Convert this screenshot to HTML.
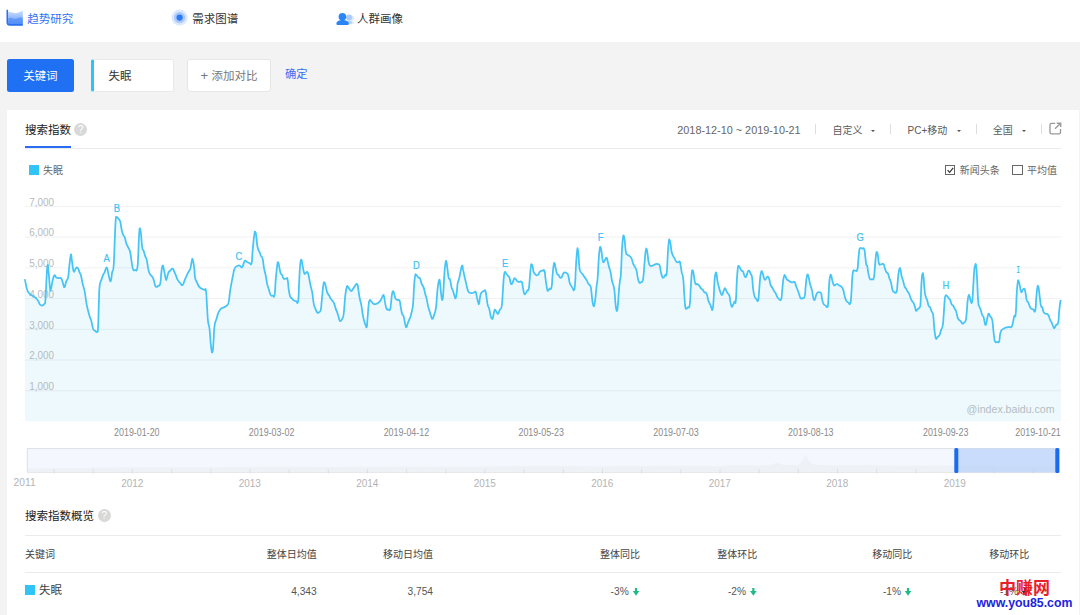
<!DOCTYPE html>
<html lang="zh-CN"><head><meta charset="utf-8"><title>百度指数 - 失眠</title>
<style>
html,body{margin:0;padding:0}
body{width:1080px;height:615px;overflow:hidden;background:#f3f3f3;font-family:"Liberation Sans","Noto Sans CJK SC",sans-serif;color:#333;position:relative}
.abs{position:absolute;white-space:nowrap;line-height:1}
.top{left:0;top:0;width:1080px;height:42px;background:#fff}
.nav{font-size:11.5px;top:13.7px}
.card{left:6.5px;top:109.5px;width:1072.5px;height:520px;background:#fff}
.btn{left:6.7px;top:58.6px;width:67.4px;height:33.1px;background:#2070f3;border-radius:2.5px;color:#fff;font-size:11.5px;text-align:center;line-height:34.5px}
.inp{left:90.7px;top:58.6px;width:82.9px;height:33.1px;background:#fff;border-radius:2.5px;box-sizing:border-box;border:1px solid #e9e9e9;border-left:3.3px solid #2bc4f7;font-size:11.5px;line-height:33.3px;padding-left:14.8px}
.add{left:187.4px;top:58.6px;width:83.4px;height:33.1px;background:#fff;border-radius:3px;box-sizing:border-box;border:1px solid #e6e6e6;font-size:11.5px;line-height:32.5px;color:#777;padding-left:12px}
.ok{left:285px;top:69.3px;font-size:11.3px;color:#3a6df2}
.h{font-size:11.5px;color:#222}
.help{width:13px;height:13px;border-radius:50%;background:#d8d8d8;color:#fff;font-size:10.6px;text-align:center;line-height:13.6px}
.ctl{font-size:10px;color:#5a5a5a;top:126.2px}
.sep{width:1px;height:10px;background:#dedede;top:124.3px}
.tri{width:0;height:0;border-left:2.1px solid transparent;border-right:2.1px solid transparent;border-top:2.4px solid #555;top:129.9px}
.cb{width:8.4px;height:8.4px;border:1px solid #666;background:#fff;top:164.9px}
.t{font-size:10px;color:#444}
.v{font-size:10.2px;color:#555}
.hl{height:1px;background:#ebebeb}
.chart{position:absolute;left:0;top:0}
</style></head><body>
<div class="abs top"></div>
<svg class="abs" style="left:6px;top:9px" width="18" height="18" viewBox="0 0 18 18"><defs><linearGradient id="g1" x1="0" y1="0" x2="0" y2="1"><stop offset="0" stop-color="#d3e3fd"/><stop offset="1" stop-color="#5a93f6"/></linearGradient></defs><path d="M2.2,3.6 C5.5,1.8 8,5.4 11.5,3.8 C13.5,3 15,2.2 16.8,1.2 L16.8,15.5 L2.2,15.5 Z" fill="url(#g1)"/><path d="M2.2,9.5 C5,7.5 7.5,11 10.5,9.6 C12.8,8.6 14.8,8.2 16.8,8.6 L16.8,15.5 L2.2,15.5 Z" fill="#4a8af6" fill-opacity=".6"/><path d="M1.3,0.8 L1.3,13.2 Q1.3,15.9 4,15.9 L16.8,15.9" fill="none" stroke="#2a6ef2" stroke-width="1.6"/></svg>
<div class="abs nav" style="left:27.3px;color:#3571f5">趋势研究</div>
<svg class="abs" style="left:170px;top:8px" width="20" height="20" viewBox="0 0 20 20"><circle cx="9.6" cy="9.6" r="8" fill="#dbe8fd"/><circle cx="9.6" cy="9.6" r="5.6" fill="#a9c8fb"/><circle cx="9.6" cy="9.6" r="3.1" fill="#2b7af5"/></svg>
<div class="abs nav" style="left:192.2px">需求图谱</div>
<svg class="abs" style="left:335px;top:10.6px" width="22" height="16" viewBox="0 0 22 16"><circle cx="16.4" cy="7" r="2.6" fill="#d9e8fe"/><path d="M13,13.6 C13,11 14.6,10.2 16.2,10.2 C17.8,10.2 19.2,11.4 19.2,12.6 Z" fill="#e1edfe"/><circle cx="14" cy="6.4" r="3" fill="#a9cbfb"/><path d="M9.5,14 C9.5,10.5 12,9.6 14,9.6 C16,9.6 17.4,10.6 17.6,12.4 Z" fill="#b9d5fc"/><circle cx="7.4" cy="5.8" r="3.8" fill="#2a85f7"/><path d="M1.4,12.8 C1.4,10 4.2,8.9 7.4,8.9 C10.8,8.9 13.8,10 13.8,12.8 C13.8,13.6 13.2,14.1 12.4,14.1 L2.8,14.1 C2,14.1 1.4,13.6 1.4,12.8 Z" fill="#2a85f7"/></svg>
<div class="abs nav" style="left:357px">人群画像</div>

<div class="abs btn">关键词</div>
<div class="abs inp">失眠</div>
<div class="abs add"><span style="font-size:13px;position:relative;top:.5px">+</span><span style="margin-left:3.6px">添加对比</span></div>
<div class="abs ok">确定</div>

<div class="abs card"></div>
<div class="abs h" style="left:25px;top:125px">搜索指数</div>
<div class="abs help" style="left:74.3px;top:123px">?</div>
<div class="abs hl" style="left:25px;top:147.6px;width:1036px"></div>
<div class="abs" style="left:25px;top:145.5px;width:46px;height:2.5px;background:#2a6cf2"></div>

<div class="abs ctl" style="left:677.3px;font-size:10.85px;top:125.1px;color:#666">2018-12-10 ~ 2019-10-21</div>
<div class="abs sep" style="left:814.7px"></div>
<div class="abs ctl" style="left:832.5px">自定义</div><div class="abs tri" style="left:871.3px"></div>
<div class="abs sep" style="left:890.1px"></div>
<div class="abs ctl" style="left:907.5px">PC+移动</div><div class="abs tri" style="left:956.7px"></div>
<div class="abs sep" style="left:975.6px"></div>
<div class="abs ctl" style="left:992.8px">全国</div><div class="abs tri" style="left:1022.1px"></div>
<div class="abs sep" style="left:1040.8px"></div>
<svg class="abs" style="left:1049px;top:122.4px" width="13" height="13" viewBox="0 0 13 13"><path d="M6.2,1.3 L2.6,1.3 Q1,1.3 1,2.9 L1,10.2 Q1,11.8 2.6,11.8 L9.9,11.8 Q11.5,11.8 11.5,10.2 L11.5,7" fill="none" stroke="#999" stroke-width="1.35"/><path d="M6,6.8 L11.3,1.5 M7.8,1.2 L11.7,1.2 L11.7,5.1" fill="none" stroke="#999" stroke-width="1.35"/></svg>

<div class="abs" style="left:29px;top:165px;width:10px;height:10px;background:#30c4f8"></div>
<div class="abs t" style="left:43px;top:166.2px;color:#666">失眠</div>
<div class="abs cb" style="left:945.1px"></div>
<svg class="abs" style="left:945px;top:165px" width="11" height="11" viewBox="0 0 11 11"><path d="M2.6,5.2 L4.6,7.4 L8.2,2.9" fill="none" stroke="#333" stroke-width="1.2"/></svg>
<div class="abs t" style="left:959.8px;top:166px;color:#666">新闻头条</div>
<div class="abs cb" style="left:1012.3px"></div>
<div class="abs t" style="left:1027px;top:166px;color:#666">平均值</div>

<svg class="chart" width="1080" height="615" viewBox="0 0 1080 615">
<style>
.yl{font:10.9px "Liberation Sans","Noto Sans CJK SC",sans-serif;fill:#b6babd}
.mk{font:10.4px "Liberation Sans",sans-serif;fill:#3cc1f5;stroke:#3cc1f5;stroke-width:.2;text-anchor:middle}
.xl{font:10.3px "Liberation Sans",sans-serif;fill:#8a8a8a}
.yr{font:10.9px "Liberation Sans",sans-serif;fill:#b4b4b4}
.wm{font:10.6px "Liberation Sans",sans-serif;fill:#b3bcc1}
</style>
<line x1="25" x2="1061" y1="390.8" y2="390.8" stroke="#f1f1f1" stroke-width="1"/><line x1="25" x2="1061" y1="360.0" y2="360.0" stroke="#f1f1f1" stroke-width="1"/><line x1="25" x2="1061" y1="329.3" y2="329.3" stroke="#f1f1f1" stroke-width="1"/><line x1="25" x2="1061" y1="298.6" y2="298.6" stroke="#f1f1f1" stroke-width="1"/><line x1="25" x2="1061" y1="267.9" y2="267.9" stroke="#f1f1f1" stroke-width="1"/><line x1="25" x2="1061" y1="237.1" y2="237.1" stroke="#f1f1f1" stroke-width="1"/><line x1="25" x2="1061" y1="206.4" y2="206.4" stroke="#f1f1f1" stroke-width="1"/>
<path d="M25.0,279.9 C25.7,282.7 25.8,286.6 27.5,290.6 C29.2,294.6 29.3,293.1 31.3,294.9 C33.3,296.7 33.2,295.9 35.0,297.4 C36.8,298.9 36.6,298.6 38.0,300.6 C39.5,302.7 38.9,304.2 40.5,305.1 C42.2,306.1 43.0,305.9 44.3,304.1 C45.6,302.4 44.9,305.5 45.5,298.6 C46.1,291.8 46.0,287.4 46.5,278.6 C47.1,269.8 47.0,267.6 47.5,265.6 C48.1,263.6 47.9,265.1 48.5,271.1 C49.2,277.1 49.4,283.4 50.0,288.1 C50.7,292.8 50.4,290.5 51.0,288.6 C51.7,286.8 51.7,284.6 52.5,281.1 C53.4,277.6 53.3,276.4 54.3,275.4 C55.3,274.4 55.1,276.6 56.3,277.4 C57.5,278.1 57.5,277.8 58.8,278.1 C60.1,278.4 60.2,277.1 61.3,278.6 C62.4,280.1 62.2,281.4 63.1,283.6 C63.9,285.9 63.7,287.8 64.6,287.1 C65.4,286.5 65.4,283.7 66.3,281.1 C67.3,278.5 67.3,281.4 68.1,277.4 C68.9,273.4 68.6,272.1 69.3,266.1 C70.1,260.1 70.2,256.5 70.8,254.8 C71.5,253.2 71.1,255.5 71.8,259.8 C72.6,264.2 72.6,268.8 73.6,271.1 C74.6,273.4 74.5,269.5 75.6,268.6 C76.6,267.7 76.5,266.8 77.6,267.8 C78.7,268.8 78.7,270.1 79.6,272.4 C80.5,274.6 80.3,273.1 81.1,276.1 C81.9,279.1 81.7,279.6 82.6,283.6 C83.5,287.6 83.6,286.1 84.6,291.1 C85.6,296.1 85.5,297.7 86.3,302.4 C87.1,307.1 86.7,305.0 87.6,308.6 C88.5,312.3 88.6,312.8 89.6,316.2 C90.6,319.5 90.4,317.8 91.4,321.2 C92.3,324.5 92.1,326.1 93.1,328.7 C94.1,331.2 94.0,329.9 95.1,330.7 C96.2,331.5 96.3,332.9 97.1,331.7 C97.9,330.5 97.7,334.3 98.1,326.2 C98.6,318.0 98.5,311.8 98.9,301.1 C99.3,290.5 99.0,291.8 99.6,286.1 C100.3,280.4 100.4,282.9 101.4,279.9 C102.3,276.9 102.3,276.9 103.1,274.9 C104.0,272.8 103.7,274.4 104.6,272.4 C105.6,270.3 105.7,267.3 106.6,267.3 C107.6,267.3 107.3,269.2 108.1,272.4 C108.9,275.5 108.9,276.9 109.6,279.1 C110.4,281.3 110.2,282.4 110.9,280.6 C111.6,278.8 111.4,276.2 112.1,272.4 C112.9,268.5 113.0,273.8 113.6,266.1 C114.3,258.4 114.1,255.6 114.6,243.6 C115.2,231.5 115.1,228.0 115.6,221.0 C116.2,214.0 116.0,217.9 116.6,217.3 C117.3,216.6 117.2,217.4 118.2,218.5 C119.1,219.7 119.2,218.5 120.2,221.5 C121.1,224.5 120.9,226.3 121.7,229.8 C122.5,233.3 122.3,232.8 123.2,234.8 C124.0,236.8 123.8,235.0 124.7,237.3 C125.5,239.6 125.5,240.9 126.4,243.6 C127.3,246.2 127.2,245.0 128.2,247.3 C129.2,249.6 129.2,248.3 130.2,252.3 C131.1,256.3 130.9,257.8 131.7,262.3 C132.5,266.9 132.2,267.3 133.2,269.4 C134.1,271.4 134.1,270.1 135.2,269.9 C136.2,269.6 136.4,272.3 137.2,268.6 C138.0,264.9 137.6,265.4 138.2,256.1 C138.7,246.7 138.6,240.8 139.2,233.5 C139.7,226.3 139.6,228.4 140.2,229.0 C140.7,229.7 140.6,231.2 141.2,236.1 C141.7,240.9 141.5,243.3 142.2,247.3 C142.8,251.3 142.9,248.7 143.7,251.1 C144.5,253.4 144.4,253.7 145.2,256.1 C146.0,258.4 145.9,256.5 146.7,259.8 C147.5,263.2 147.4,264.9 148.2,268.6 C149.0,272.3 148.8,271.6 149.7,273.6 C150.6,275.6 150.6,274.4 151.7,276.1 C152.8,277.8 152.8,277.3 153.7,279.9 C154.6,282.4 154.4,283.8 155.2,285.6 C156.0,287.5 155.9,286.9 156.7,286.9 C157.5,286.9 157.3,286.5 158.2,285.6 C159.1,284.8 159.3,287.5 160.2,283.6 C161.1,279.7 160.8,275.9 161.5,271.1 C162.1,266.3 162.0,265.9 162.7,265.6 C163.4,265.3 163.2,266.4 164.0,269.9 C164.8,273.3 165.0,276.3 165.7,278.6 C166.5,280.9 166.1,280.1 166.7,278.6 C167.4,277.1 167.3,275.2 168.2,273.1 C169.2,271.0 169.0,271.8 170.2,270.6 C171.4,269.4 171.7,268.3 172.7,268.6 C173.8,268.9 173.4,269.9 174.2,271.6 C175.0,273.3 174.8,272.6 175.7,274.9 C176.7,277.1 176.5,277.7 177.7,279.9 C178.9,282.1 178.9,281.8 180.2,283.1 C181.6,284.5 181.5,285.7 182.7,284.9 C183.9,284.0 183.8,282.1 184.8,279.9 C185.7,277.7 185.3,278.6 186.2,276.6 C187.2,274.6 187.2,274.5 188.2,272.4 C189.3,270.2 189.3,271.6 190.3,268.6 C191.2,265.6 191.1,263.4 191.8,261.1 C192.4,258.7 192.1,257.8 192.8,259.8 C193.4,261.8 193.7,263.9 194.3,268.6 C194.9,273.3 194.3,273.7 195.0,277.4 C195.7,281.0 195.9,279.9 197.0,282.4 C198.1,284.8 197.8,285.0 199.0,286.6 C200.2,288.3 200.1,287.8 201.5,288.6 C203.0,289.5 203.3,289.2 204.5,289.9 C205.7,290.5 205.4,286.8 206.0,291.1 C206.7,295.5 206.5,298.1 207.0,306.1 C207.6,314.2 207.4,315.2 208.0,321.2 C208.7,327.2 208.7,322.0 209.5,328.7 C210.3,335.4 210.2,340.0 211.0,346.2 C211.8,352.4 211.9,353.3 212.5,352.0 C213.2,350.6 213.0,348.1 213.5,341.2 C214.1,334.3 213.7,332.2 214.5,326.2 C215.3,320.2 215.5,322.3 216.5,318.7 C217.6,315.0 217.3,315.1 218.5,312.4 C219.7,309.7 219.7,310.0 221.1,308.6 C222.4,307.3 222.1,308.2 223.6,307.4 C225.0,306.6 225.2,307.0 226.6,305.6 C227.9,304.3 227.6,306.3 228.6,302.4 C229.5,298.5 229.3,296.5 230.1,291.1 C230.9,285.8 230.8,286.7 231.6,282.4 C232.4,278.0 232.3,278.5 233.1,274.9 C233.9,271.2 233.5,270.9 234.6,268.6 C235.6,266.3 235.7,266.9 237.1,266.1 C238.4,265.3 238.2,265.3 239.6,265.6 C240.9,265.9 241.0,267.9 242.1,267.3 C243.1,266.8 242.8,265.4 243.6,263.6 C244.4,261.8 244.1,261.0 245.1,260.6 C246.0,260.2 245.9,261.4 247.1,262.1 C248.3,262.7 248.4,262.8 249.6,263.1 C250.8,263.4 250.8,266.3 251.6,263.1 C252.4,259.9 251.9,258.3 252.6,251.1 C253.3,243.9 253.4,241.2 254.1,236.1 C254.8,230.9 254.8,231.5 255.3,231.8 C255.9,232.1 255.8,233.2 256.4,237.3 C257.0,241.4 256.7,243.3 257.6,247.3 C258.5,251.3 258.7,250.0 259.6,252.3 C260.5,254.7 260.3,254.4 261.1,256.1 C261.9,257.7 261.8,255.2 262.6,258.6 C263.4,261.9 263.3,264.3 264.1,268.6 C264.9,272.9 264.8,270.8 265.6,274.9 C266.4,278.9 266.3,279.9 267.1,283.6 C267.9,287.3 267.7,285.6 268.6,288.6 C269.6,291.6 269.6,293.0 270.6,294.9 C271.7,296.7 271.6,295.6 272.6,295.6 C273.7,295.6 273.8,298.8 274.6,294.9 C275.4,291.0 275.0,288.8 275.6,281.1 C276.3,273.4 276.5,271.1 277.1,266.1 C277.8,261.1 277.6,262.3 278.1,262.3 C278.7,262.3 278.5,263.2 279.1,266.1 C279.8,269.0 279.8,270.8 280.6,273.1 C281.4,275.4 281.3,273.4 282.1,274.9 C282.9,276.3 282.6,277.6 283.6,278.6 C284.7,279.6 285.1,278.4 286.1,278.6 C287.2,278.8 287.0,276.7 287.6,279.4 C288.3,282.0 288.0,284.1 288.6,288.6 C289.3,293.1 289.2,293.5 290.1,296.1 C291.1,298.8 291.1,297.4 292.1,298.6 C293.2,299.8 293.1,300.0 294.2,300.6 C295.2,301.3 295.1,301.1 296.2,301.1 C297.2,301.1 297.4,306.0 298.2,300.6 C299.0,295.3 298.6,290.7 299.2,281.1 C299.7,271.6 299.6,270.5 300.2,264.8 C300.8,259.2 300.8,259.5 301.4,259.8 C302.1,260.2 301.9,262.6 302.7,266.1 C303.4,269.6 303.4,271.2 304.2,273.1 C305.0,275.0 304.7,273.3 305.7,273.1 C306.6,272.9 306.7,270.9 307.7,272.4 C308.6,273.8 308.4,274.9 309.2,278.6 C310.0,282.3 309.9,282.4 310.7,286.1 C311.5,289.8 311.4,287.7 312.2,292.4 C313.0,297.1 312.9,299.4 313.7,303.6 C314.5,307.9 314.3,305.8 315.2,308.1 C316.1,310.5 316.3,311.3 317.2,312.4 C318.1,313.5 317.8,313.1 318.7,312.4 C319.6,311.7 319.9,312.9 320.7,309.9 C321.5,306.9 321.0,307.5 321.7,301.1 C322.4,294.8 322.5,291.1 323.2,286.1 C323.9,281.1 323.8,282.4 324.4,282.4 C325.1,282.4 325.0,283.4 325.7,286.1 C326.4,288.8 326.3,289.8 327.2,292.4 C328.1,294.9 328.3,294.0 329.2,295.6 C330.1,297.3 329.8,297.2 330.7,298.6 C331.6,300.1 331.8,299.8 332.7,301.1 C333.6,302.5 333.4,301.6 334.2,303.6 C335.0,305.7 334.9,306.3 335.7,308.6 C336.5,311.0 336.4,310.1 337.2,312.4 C338.0,314.7 337.9,315.1 338.7,317.4 C339.5,319.8 339.3,320.8 340.2,321.2 C341.2,321.5 341.3,320.7 342.2,318.7 C343.2,316.7 342.9,319.7 343.7,313.7 C344.5,307.7 344.4,303.2 345.2,296.1 C346.0,289.1 346.1,289.9 346.7,287.4 C347.4,284.8 347.1,286.3 347.7,286.6 C348.4,287.0 348.3,287.4 349.2,288.6 C350.2,289.8 350.2,291.1 351.2,291.1 C352.3,291.1 352.2,290.1 353.2,288.6 C354.3,287.2 354.2,286.8 355.2,285.6 C356.3,284.4 356.4,283.3 357.2,284.1 C358.1,284.9 357.6,284.7 358.2,288.6 C358.9,292.5 358.9,294.3 359.8,298.6 C360.6,303.0 360.5,300.6 361.3,304.9 C362.1,309.2 362.0,310.6 362.8,314.9 C363.6,319.2 363.5,318.5 364.3,321.2 C365.0,323.8 364.8,323.5 365.5,324.9 C366.2,326.4 366.2,328.3 366.8,326.7 C367.3,325.0 367.0,324.1 367.5,318.7 C368.0,313.2 368.0,311.0 368.5,306.1 C369.0,301.3 368.8,302.0 369.5,300.6 C370.2,299.3 370.1,300.3 371.0,301.1 C372.0,301.9 372.0,302.8 373.0,303.6 C374.1,304.5 374.0,304.1 375.0,304.1 C376.1,304.1 375.8,304.3 377.0,303.6 C378.2,303.0 378.3,303.0 379.5,301.6 C380.7,300.3 380.6,300.3 381.5,298.6 C382.5,297.0 382.4,296.0 383.0,295.4 C383.7,294.7 383.5,294.3 384.0,296.1 C384.6,298.0 384.4,299.1 385.0,302.4 C385.7,305.7 385.7,306.8 386.5,308.6 C387.3,310.5 387.1,309.2 388.0,309.4 C389.0,309.6 389.2,311.3 390.1,309.4 C390.9,307.5 390.5,306.6 391.1,302.4 C391.6,298.2 391.5,296.6 392.1,293.6 C392.6,290.6 392.5,291.1 393.1,291.1 C393.6,291.1 393.4,291.6 394.1,293.6 C394.7,295.6 394.6,297.0 395.6,298.6 C396.5,300.3 396.5,299.4 397.6,299.9 C398.6,300.4 398.8,299.0 399.6,300.6 C400.4,302.3 399.9,302.7 400.6,306.1 C401.2,309.6 401.3,311.0 402.1,313.7 C402.9,316.3 402.8,313.5 403.6,316.2 C404.4,318.8 404.3,320.7 405.1,323.7 C405.8,326.7 405.7,327.4 406.3,327.4 C407.0,327.4 406.8,325.7 407.6,323.7 C408.3,321.7 408.3,321.9 409.1,319.9 C409.9,317.9 409.8,318.8 410.6,316.2 C411.4,313.5 411.4,313.2 412.1,309.9 C412.7,306.6 412.5,310.0 413.1,303.6 C413.6,297.3 413.5,293.5 414.1,286.1 C414.6,278.8 414.5,279.1 415.1,276.1 C415.7,273.1 415.5,274.5 416.3,274.9 C417.1,275.2 417.1,276.4 418.1,277.4 C419.1,278.4 419.2,276.9 420.1,278.6 C421.0,280.3 420.7,281.3 421.6,283.6 C422.5,286.0 422.7,284.7 423.6,287.4 C424.5,290.0 424.3,290.6 425.1,293.6 C425.9,296.6 425.8,295.3 426.6,298.6 C427.4,302.0 427.3,302.8 428.1,306.1 C428.9,309.5 428.8,308.5 429.6,311.2 C430.4,313.8 430.3,314.2 431.1,316.2 C431.9,318.2 431.8,319.0 432.6,318.7 C433.4,318.3 433.3,317.2 434.1,314.9 C434.9,312.6 434.9,313.6 435.6,309.9 C436.3,306.2 436.1,306.8 436.6,301.1 C437.1,295.5 437.0,294.2 437.6,288.6 C438.3,283.0 438.5,281.4 439.1,280.1 C439.8,278.8 439.6,280.0 440.1,283.6 C440.7,287.2 440.5,289.3 441.1,293.6 C441.7,298.0 441.8,300.6 442.4,299.9 C443.0,299.2 442.8,298.1 443.4,291.1 C443.9,284.1 443.8,280.9 444.4,273.6 C444.9,266.3 444.8,266.8 445.4,263.6 C445.9,260.4 445.8,260.2 446.4,261.6 C446.9,262.9 446.8,264.4 447.4,268.6 C448.0,272.8 447.9,274.4 448.6,277.4 C449.4,280.4 449.3,277.2 450.1,279.9 C450.9,282.5 450.8,284.4 451.6,287.4 C452.4,290.4 452.3,288.8 453.1,291.1 C453.9,293.5 454.0,294.3 454.6,296.1 C455.3,298.0 455.1,298.8 455.6,298.1 C456.2,297.5 456.1,297.5 456.6,293.6 C457.2,289.8 457.0,287.6 457.6,283.6 C458.3,279.6 458.3,281.9 459.1,278.6 C459.9,275.3 459.8,274.6 460.6,271.1 C461.4,267.6 461.5,265.9 462.1,265.6 C462.8,265.3 462.5,266.7 463.1,269.9 C463.8,273.0 463.9,273.7 464.7,277.4 C465.5,281.0 465.4,280.3 466.2,283.6 C467.0,287.0 466.9,287.5 467.7,289.9 C468.5,292.2 468.1,291.5 469.2,292.4 C470.2,293.2 470.3,293.1 471.7,293.1 C473.0,293.1 473.1,292.7 474.2,292.4 C475.2,292.0 475.0,290.9 475.7,291.9 C476.3,292.9 476.0,293.3 476.7,296.1 C477.3,298.9 477.5,300.5 478.2,302.4 C478.8,304.3 478.6,304.8 479.2,303.1 C479.7,301.5 479.5,299.0 480.2,296.1 C480.8,293.3 480.7,293.7 481.7,292.4 C482.6,291.0 482.8,291.6 483.7,291.1 C484.6,290.7 484.5,289.6 485.2,290.6 C485.9,291.6 485.5,291.1 486.2,294.9 C486.9,298.7 486.9,301.2 487.7,304.9 C488.5,308.6 488.4,305.6 489.2,308.6 C490.0,311.7 489.9,313.4 490.7,316.2 C491.5,319.0 491.5,319.2 492.2,319.2 C492.9,319.2 492.7,318.3 493.2,316.2 C493.7,314.0 493.7,312.8 494.2,311.2 C494.7,309.5 494.5,309.6 495.2,309.9 C495.9,310.2 495.9,311.4 496.7,312.4 C497.5,313.4 497.4,314.3 498.2,313.7 C499.0,313.0 498.8,311.9 499.7,309.9 C500.6,307.9 500.9,310.5 501.7,306.1 C502.5,301.8 502.2,301.0 502.7,293.6 C503.2,286.3 503.2,284.3 503.7,278.6 C504.3,272.9 504.1,273.7 504.7,272.4 C505.4,271.0 505.4,272.7 506.2,273.6 C507.0,274.5 506.9,274.7 507.7,275.6 C508.5,276.5 508.6,275.4 509.2,276.9 C509.9,278.3 509.7,279.2 510.2,281.1 C510.8,283.0 510.6,283.8 511.2,284.1 C511.9,284.5 511.9,283.8 512.7,282.4 C513.5,280.9 513.4,279.5 514.2,278.6 C515.0,277.7 514.9,278.4 515.7,279.1 C516.5,279.8 516.3,280.4 517.2,281.1 C518.2,281.8 518.0,281.7 519.2,281.9 C520.4,282.1 520.8,280.7 521.7,281.9 C522.7,283.0 522.1,283.0 522.7,286.1 C523.4,289.3 523.4,291.8 524.2,293.6 C525.1,295.5 525.0,293.9 525.8,293.1 C526.5,292.3 526.5,291.8 527.2,290.6 C528.0,289.4 528.1,291.8 528.8,288.6 C529.4,285.4 529.2,284.3 529.8,278.6 C530.3,272.9 530.2,271.1 530.8,267.3 C531.3,263.5 531.2,264.3 531.8,264.3 C532.3,264.3 532.2,265.2 532.8,267.3 C533.3,269.5 532.9,270.3 533.8,272.4 C534.6,274.4 534.9,274.2 536.0,274.9 C537.1,275.5 536.9,275.7 538.0,274.9 C539.1,274.0 538.8,272.7 540.0,271.6 C541.2,270.5 541.3,270.7 542.5,270.6 C543.7,270.5 543.7,269.0 544.5,271.1 C545.3,273.2 544.9,273.9 545.5,278.6 C546.2,283.3 546.4,285.4 547.0,288.6 C547.7,291.8 547.4,290.6 548.0,290.6 C548.7,290.6 548.6,289.5 549.5,288.6 C550.5,287.8 550.7,290.7 551.5,287.4 C552.3,284.0 552.0,281.8 552.5,276.1 C553.1,270.4 553.0,269.6 553.5,266.1 C554.1,262.6 554.0,262.8 554.5,263.1 C555.1,263.4 554.9,264.5 555.5,267.3 C556.2,270.1 556.2,271.6 557.0,273.6 C557.8,275.6 557.7,273.8 558.5,274.9 C559.3,275.9 559.2,276.7 560.0,277.4 C560.9,278.0 560.8,278.2 561.5,277.4 C562.3,276.5 562.2,275.4 563.0,274.1 C563.8,272.8 563.6,272.6 564.5,272.4 C565.5,272.1 565.6,272.4 566.5,273.1 C567.5,273.8 567.3,272.4 568.1,274.9 C568.9,277.3 568.8,279.5 569.6,282.4 C570.4,285.2 570.3,284.1 571.1,285.6 C571.9,287.2 571.8,287.0 572.6,288.1 C573.4,289.3 573.4,291.1 574.1,289.9 C574.7,288.7 574.5,290.6 575.1,283.6 C575.6,276.6 575.5,272.3 576.1,263.6 C576.6,254.9 576.6,254.9 577.1,251.1 C577.5,247.3 577.4,248.0 577.8,249.3 C578.2,250.6 578.1,250.9 578.6,256.1 C579.0,261.2 578.9,264.3 579.6,268.6 C580.2,272.9 580.3,270.9 581.1,272.4 C581.9,273.8 581.8,273.0 582.6,274.1 C583.4,275.2 583.3,275.4 584.1,276.6 C584.9,277.8 584.8,277.4 585.6,278.6 C586.4,279.8 586.3,279.6 587.1,281.1 C587.9,282.6 587.7,282.7 588.6,284.1 C589.5,285.6 589.8,284.1 590.6,286.6 C591.4,289.2 591.1,289.4 591.6,293.6 C592.1,297.8 592.1,299.1 592.6,302.4 C593.1,305.7 593.1,305.8 593.6,306.1 C594.1,306.5 594.1,306.3 594.6,303.6 C595.1,301.0 595.1,300.8 595.6,296.1 C596.1,291.5 596.1,290.8 596.6,286.1 C597.1,281.4 597.1,285.3 597.6,278.6 C598.1,271.9 598.1,268.8 598.6,261.1 C599.1,253.4 599.1,253.5 599.6,249.8 C600.1,246.1 600.1,246.6 600.6,247.3 C601.1,248.0 601.1,249.0 601.6,252.3 C602.1,255.7 602.1,257.2 602.6,259.8 C603.1,262.5 602.9,262.3 603.6,262.3 C604.3,262.3 604.3,261.0 605.1,259.8 C605.9,258.6 605.9,257.5 606.6,257.8 C607.3,258.2 607.0,258.5 607.6,261.1 C608.3,263.6 608.3,264.3 609.1,267.3 C609.9,270.3 609.8,268.7 610.6,272.4 C611.4,276.0 611.3,277.4 612.1,281.1 C612.9,284.8 613.0,283.1 613.6,286.1 C614.3,289.1 614.1,287.4 614.6,292.4 C615.2,297.4 615.0,299.9 615.6,304.9 C616.2,309.9 616.3,311.2 616.9,311.2 C617.5,311.2 617.3,310.2 617.9,304.9 C618.4,299.6 618.3,297.5 618.9,291.1 C619.4,284.8 619.3,285.8 619.9,281.1 C620.4,276.4 620.4,281.6 620.9,273.6 C621.4,265.6 621.4,260.4 621.9,251.1 C622.4,241.7 622.4,242.6 622.9,238.6 C623.4,234.5 623.4,235.1 623.9,236.1 C624.4,237.1 624.4,238.0 624.9,242.3 C625.4,246.6 625.2,249.0 625.9,252.3 C626.6,255.7 626.6,253.8 627.6,254.8 C628.7,255.8 628.6,255.1 629.6,256.1 C630.7,257.1 630.7,256.6 631.6,258.6 C632.6,260.6 632.2,261.3 633.1,263.6 C634.1,265.9 634.2,265.3 635.2,267.3 C636.1,269.3 636.0,268.4 636.7,271.1 C637.3,273.8 637.0,274.4 637.7,277.4 C638.3,280.4 638.4,281.0 639.2,282.4 C640.0,283.7 639.7,282.8 640.7,282.4 C641.6,281.9 641.9,282.9 642.7,280.6 C643.5,278.3 643.1,278.8 643.7,273.6 C644.2,268.4 644.1,267.1 644.7,261.1 C645.2,255.1 645.1,254.3 645.7,251.1 C646.2,247.9 646.1,248.1 646.7,249.1 C647.2,250.1 647.1,251.3 647.7,254.8 C648.2,258.4 648.0,259.5 648.7,262.3 C649.3,265.2 649.1,264.7 650.2,265.6 C651.2,266.5 651.3,265.9 652.7,265.6 C654.0,265.3 653.9,264.7 655.2,264.3 C656.5,263.9 656.5,263.8 657.7,264.1 C658.9,264.4 658.9,263.7 659.7,265.6 C660.5,267.5 660.0,268.2 660.7,271.1 C661.4,274.0 661.4,274.9 662.2,276.6 C663.0,278.3 662.9,277.8 663.7,277.4 C664.5,276.9 664.4,276.0 665.2,274.9 C666.0,273.7 666.0,278.1 666.7,273.1 C667.4,268.1 667.2,264.3 667.7,256.1 C668.2,247.9 668.2,246.5 668.7,242.3 C669.2,238.1 669.2,239.6 669.7,240.3 C670.2,241.0 670.2,241.6 670.7,244.8 C671.2,248.0 671.0,249.3 671.7,252.3 C672.4,255.3 672.4,254.4 673.2,256.1 C674.0,257.7 673.9,257.1 674.7,258.6 C675.5,260.0 675.3,260.6 676.2,261.6 C677.2,262.6 677.3,262.3 678.2,262.3 C679.2,262.3 679.1,260.6 679.7,261.6 C680.4,262.6 680.2,263.2 680.7,266.1 C681.3,269.0 681.1,269.0 681.7,272.4 C682.4,275.7 682.6,272.9 683.2,278.6 C683.9,284.3 683.7,286.3 684.2,293.6 C684.8,301.0 684.7,302.1 685.2,306.1 C685.8,310.2 685.6,308.3 686.2,308.6 C686.9,309.0 686.8,308.4 687.7,307.4 C688.7,306.4 688.9,309.9 689.7,304.9 C690.5,299.9 690.2,297.0 690.7,288.6 C691.3,280.3 691.2,278.4 691.7,273.6 C692.3,268.8 692.2,270.3 692.7,270.6 C693.3,270.9 693.1,271.5 693.8,274.9 C694.4,278.2 694.3,280.6 695.2,283.1 C696.2,285.6 696.2,283.5 697.2,284.1 C698.3,284.8 698.3,284.6 699.2,285.6 C700.2,286.7 699.8,287.0 700.8,288.1 C701.7,289.3 701.8,288.7 702.8,289.9 C703.7,291.0 703.5,291.7 704.3,292.4 C705.0,293.0 704.8,291.7 705.5,292.4 C706.2,293.0 706.2,292.5 707.0,294.9 C707.8,297.2 707.7,298.7 708.5,301.1 C709.3,303.6 709.2,302.3 710.0,304.1 C710.8,306.0 710.9,306.7 711.5,308.1 C712.2,309.6 712.0,311.3 712.5,309.4 C713.1,307.5 713.0,308.7 713.5,301.1 C714.1,293.6 714.0,288.5 714.5,281.1 C715.1,273.8 715.0,275.5 715.5,273.6 C716.1,271.7 716.0,272.1 716.5,274.1 C717.1,276.1 716.9,277.6 717.5,281.1 C718.2,284.6 718.2,284.4 719.0,287.4 C719.8,290.4 719.7,290.4 720.5,292.4 C721.3,294.4 721.2,295.2 722.0,294.9 C722.8,294.5 722.7,292.9 723.5,291.1 C724.3,289.3 724.2,288.1 725.0,288.1 C725.8,288.1 725.7,289.7 726.5,291.1 C727.3,292.6 727.2,292.3 728.0,293.6 C728.8,295.0 728.9,293.8 729.5,296.1 C730.2,298.5 729.9,299.6 730.5,302.4 C731.2,305.2 731.1,306.0 731.8,306.6 C732.5,307.3 732.3,306.2 733.0,304.9 C733.8,303.6 733.8,302.8 734.5,301.6 C735.3,300.5 735.2,306.1 735.8,300.6 C736.4,295.2 736.3,289.7 736.8,281.1 C737.3,272.6 737.3,272.6 737.8,268.6 C738.3,264.6 738.2,266.2 738.8,266.1 C739.4,266.0 739.3,266.9 740.1,268.1 C740.8,269.3 740.8,269.7 741.6,270.6 C742.4,271.5 742.3,270.1 743.1,271.6 C743.9,273.1 743.8,274.8 744.6,276.1 C745.4,277.4 745.3,277.6 746.1,276.6 C746.9,275.6 746.8,274.0 747.6,272.4 C748.4,270.7 748.3,270.3 749.1,270.6 C749.9,270.9 749.8,271.8 750.6,273.6 C751.4,275.4 751.4,273.4 752.1,277.4 C752.7,281.4 752.4,283.5 753.1,288.6 C753.7,293.8 753.8,294.0 754.6,296.6 C755.4,299.3 755.1,297.6 756.1,298.6 C757.0,299.6 757.3,302.4 758.1,300.4 C758.9,298.4 758.6,296.9 759.1,291.1 C759.6,285.3 759.6,283.6 760.1,278.6 C760.6,273.6 760.6,274.2 761.1,272.4 C761.6,270.5 761.6,270.9 762.1,271.6 C762.6,272.3 762.4,272.8 763.1,274.9 C763.8,276.9 763.8,278.4 764.6,279.4 C765.4,280.4 765.3,279.3 766.1,278.6 C766.9,277.9 766.8,276.6 767.6,276.6 C768.4,276.6 768.3,276.4 769.1,278.6 C769.9,280.8 769.7,282.3 770.6,284.9 C771.5,287.4 771.7,286.5 772.6,288.1 C773.5,289.8 773.3,289.8 774.1,291.1 C774.9,292.5 774.8,291.7 775.6,293.1 C776.4,294.6 776.3,295.2 777.1,296.6 C777.9,298.1 777.6,297.9 778.6,298.6 C779.7,299.4 780.2,301.4 781.1,299.4 C782.1,297.4 781.6,296.0 782.1,291.1 C782.7,286.3 782.6,285.1 783.1,281.1 C783.7,277.1 783.6,277.6 784.1,276.1 C784.7,274.6 784.5,274.8 785.1,275.6 C785.8,276.4 785.7,277.8 786.6,279.1 C787.6,280.4 787.6,279.9 788.6,280.6 C789.7,281.3 789.6,281.4 790.6,281.9 C791.7,282.3 791.6,282.4 792.6,282.4 C793.7,282.4 793.7,280.9 794.6,281.9 C795.6,282.9 795.3,284.0 796.1,286.1 C796.9,288.3 796.8,287.7 797.6,289.9 C798.5,292.0 798.4,291.9 799.1,294.1 C799.9,296.3 799.7,297.1 800.6,298.1 C801.6,299.2 801.6,298.7 802.6,298.1 C803.7,297.6 803.9,299.3 804.7,296.1 C805.5,292.9 805.1,291.1 805.7,286.1 C806.2,281.1 806.1,280.5 806.7,277.4 C807.2,274.2 807.1,274.4 807.7,274.4 C808.2,274.4 808.1,275.2 808.7,277.4 C809.2,279.5 809.1,280.0 809.7,282.4 C810.2,284.7 810.0,283.8 810.7,286.1 C811.3,288.5 811.5,288.1 812.2,291.1 C812.8,294.1 812.5,295.1 813.2,297.4 C813.8,299.7 813.9,300.6 814.7,299.9 C815.5,299.2 815.4,296.9 816.2,294.9 C817.0,292.9 816.7,293.0 817.7,292.4 C818.6,291.7 818.7,292.0 819.7,292.4 C820.6,292.7 820.5,291.6 821.2,293.6 C821.8,295.6 821.5,297.1 822.2,299.9 C822.8,302.7 822.8,302.6 823.7,304.1 C824.6,305.7 824.8,304.9 825.7,305.6 C826.6,306.4 826.5,307.8 827.2,306.9 C827.9,306.0 827.7,308.6 828.2,302.4 C828.7,296.2 828.7,290.6 829.2,283.6 C829.7,276.6 829.7,278.2 830.2,276.1 C830.7,274.0 830.7,274.6 831.2,275.6 C831.7,276.6 831.5,277.4 832.2,279.9 C832.9,282.3 832.9,283.5 833.7,284.9 C834.5,286.2 834.3,285.1 835.2,284.9 C836.1,284.7 836.1,283.9 837.2,284.1 C838.3,284.3 838.1,285.0 839.2,285.6 C840.3,286.3 840.1,285.5 841.2,286.6 C842.3,287.8 842.3,287.3 843.2,289.9 C844.1,292.4 843.9,293.3 844.7,296.1 C845.5,299.0 845.3,299.0 846.2,300.6 C847.2,302.3 847.2,301.6 848.2,302.4 C849.3,303.2 849.4,305.3 850.2,303.6 C851.0,302.0 850.7,302.8 851.2,296.1 C851.8,289.5 851.7,285.3 852.2,278.6 C852.8,271.9 852.6,273.2 853.2,271.1 C853.9,269.0 853.7,270.9 854.7,270.6 C855.8,270.3 856.3,272.4 857.2,269.9 C858.2,267.3 857.7,266.1 858.2,261.1 C858.8,256.1 858.7,254.5 859.2,251.1 C859.8,247.6 859.4,248.7 860.2,248.1 C861.0,247.4 861.2,248.3 862.2,248.6 C863.3,248.8 863.4,247.1 864.2,249.1 C865.1,251.1 864.7,252.1 865.2,256.1 C865.8,260.1 865.7,261.4 866.2,264.1 C866.8,266.8 866.7,263.9 867.2,266.1 C867.8,268.3 867.6,269.0 868.2,272.4 C868.9,275.7 868.8,276.8 869.8,278.6 C870.7,280.4 870.7,279.2 871.8,279.1 C872.8,279.0 873.0,280.9 873.8,278.1 C874.6,275.3 874.4,271.8 874.8,268.6 C875.1,265.4 874.7,269.8 875.0,266.1 C875.3,262.4 875.5,258.5 876.0,254.8 C876.5,251.1 876.5,252.0 877.0,252.3 C877.5,252.7 877.5,253.1 878.0,256.1 C878.5,259.1 878.2,261.4 879.0,263.6 C879.8,265.8 879.8,264.2 881.0,264.3 C882.2,264.5 882.5,263.0 883.5,264.1 C884.6,265.2 884.2,266.4 885.0,268.6 C885.8,270.8 885.7,271.0 886.5,272.4 C887.3,273.7 887.2,271.9 888.0,273.6 C888.8,275.3 888.7,276.3 889.5,278.6 C890.3,280.9 890.2,279.4 891.0,282.4 C891.8,285.4 891.7,287.3 892.5,289.9 C893.3,292.4 893.0,291.3 894.0,291.9 C895.1,292.4 895.6,294.1 896.5,291.9 C897.5,289.7 897.0,288.5 897.5,283.6 C898.1,278.7 898.0,277.6 898.5,273.6 C899.1,269.6 899.0,269.6 899.5,268.6 C900.1,267.6 900.0,268.0 900.5,269.9 C901.1,271.7 900.9,272.7 901.5,275.6 C902.2,278.5 902.2,277.8 903.0,280.6 C903.8,283.4 903.8,284.0 904.5,286.1 C905.3,288.3 905.2,287.2 906.0,288.6 C906.9,290.1 906.8,290.3 907.6,291.6 C908.4,293.0 908.3,291.9 909.1,293.6 C909.9,295.4 909.8,296.1 910.6,298.1 C911.4,300.1 911.3,299.8 912.1,301.1 C912.9,302.5 912.8,301.5 913.6,303.1 C914.4,304.8 914.4,305.4 915.1,307.4 C915.7,309.4 915.4,310.2 916.1,310.7 C916.7,311.1 916.6,310.0 917.6,309.1 C918.5,308.3 918.8,309.2 919.6,307.4 C920.4,305.6 920.0,309.4 920.6,302.4 C921.1,295.4 921.0,288.8 921.6,281.1 C922.1,273.4 922.0,274.6 922.6,273.6 C923.1,272.6 923.0,273.0 923.6,277.4 C924.1,281.7 924.0,284.9 924.6,289.9 C925.1,294.9 924.9,293.5 925.6,296.1 C926.2,298.8 926.3,297.4 927.1,299.9 C927.9,302.4 927.8,303.6 928.6,305.6 C929.4,307.7 929.3,305.9 930.1,307.4 C930.9,308.9 930.8,309.2 931.6,311.2 C932.4,313.2 932.4,310.9 933.1,314.9 C933.8,318.9 933.6,320.8 934.1,326.2 C934.6,331.5 934.6,331.6 935.1,334.9 C935.6,338.3 935.4,338.2 936.1,338.7 C936.8,339.2 936.7,338.0 937.6,336.9 C938.5,335.9 938.7,336.8 939.6,334.9 C940.5,333.1 940.3,332.3 941.1,329.9 C941.9,327.6 941.9,329.9 942.6,326.2 C943.3,322.5 943.1,322.8 943.6,316.2 C944.1,309.5 944.1,306.6 944.6,301.1 C945.1,295.7 944.9,297.0 945.6,295.6 C946.3,294.3 946.3,295.5 947.1,296.1 C947.9,296.8 947.8,297.1 948.6,298.1 C949.4,299.1 949.3,298.3 950.1,299.9 C950.9,301.5 950.8,302.6 951.6,304.1 C952.4,305.7 952.3,304.4 953.1,305.6 C953.9,306.8 953.8,307.2 954.6,308.6 C955.4,310.1 955.3,308.8 956.1,311.2 C956.9,313.5 956.8,315.1 957.6,317.4 C958.4,319.8 958.3,318.9 959.1,319.9 C959.9,320.9 959.7,320.2 960.6,321.2 C961.6,322.2 961.7,323.3 962.6,323.7 C963.6,324.0 963.3,323.2 964.1,322.4 C964.9,321.6 965.0,323.0 965.6,320.7 C966.3,318.3 966.1,318.9 966.6,313.7 C967.2,308.5 967.1,305.9 967.6,301.1 C968.2,296.3 968.1,297.0 968.6,295.6 C969.2,294.3 969.1,294.8 969.6,296.1 C970.2,297.5 970.0,299.2 970.6,300.6 C971.3,302.1 971.5,304.8 972.1,301.6 C972.8,298.4 972.6,296.8 973.1,288.6 C973.7,280.5 973.6,277.3 974.2,271.1 C974.7,264.9 974.6,266.5 975.2,265.3 C975.7,264.1 975.6,262.4 976.2,266.6 C976.7,270.8 976.6,271.9 977.2,281.1 C977.7,290.3 977.6,294.5 978.2,301.1 C978.7,307.8 978.5,303.8 979.2,306.1 C979.8,308.5 979.9,307.6 980.7,309.9 C981.5,312.2 981.4,312.9 982.2,314.9 C983.0,316.9 983.0,315.4 983.7,317.4 C984.3,319.4 984.1,320.4 984.7,322.4 C985.2,324.4 985.1,325.3 985.7,324.9 C986.2,324.6 986.1,323.5 986.7,321.2 C987.2,318.8 987.1,318.2 987.7,316.2 C988.2,314.2 988.0,313.7 988.7,313.7 C989.3,313.7 989.2,314.5 990.2,316.2 C991.1,317.8 991.4,316.6 992.2,319.9 C993.0,323.3 992.6,324.0 993.2,328.7 C993.7,333.4 993.7,334.0 994.2,337.4 C994.7,340.9 994.4,340.5 995.2,341.7 C996.0,342.9 996.1,342.1 997.2,341.9 C998.3,341.8 998.4,343.4 999.2,341.2 C1000.0,339.0 999.5,336.7 1000.2,333.7 C1000.9,330.7 1000.8,331.3 1001.7,329.9 C1002.6,328.6 1002.5,329.3 1003.7,328.7 C1004.9,328.0 1004.7,327.9 1006.2,327.4 C1007.7,327.0 1007.7,327.1 1009.2,326.9 C1010.7,326.7 1010.6,328.2 1011.7,326.7 C1012.8,325.1 1012.5,324.0 1013.2,321.2 C1013.9,318.4 1013.6,318.2 1014.2,316.2 C1014.9,314.2 1015.1,319.7 1015.7,313.7 C1016.4,307.6 1016.2,301.9 1016.7,293.6 C1017.3,285.3 1017.3,286.0 1017.7,282.6 C1018.2,279.2 1017.9,280.3 1018.5,280.9 C1019.0,281.5 1019.0,281.9 1019.7,284.9 C1020.5,287.8 1020.4,290.5 1021.2,291.9 C1022.0,293.2 1021.9,290.7 1022.7,289.9 C1023.5,289.0 1023.6,288.3 1024.2,288.6 C1024.9,289.0 1024.6,288.1 1025.2,291.1 C1025.9,294.1 1025.9,296.9 1026.7,299.9 C1027.5,302.9 1027.4,300.7 1028.2,302.4 C1029.0,304.1 1028.9,304.5 1029.7,306.1 C1030.5,307.8 1030.3,307.8 1031.2,308.6 C1032.2,309.5 1032.2,308.9 1033.2,309.4 C1034.3,309.9 1034.4,313.5 1035.2,310.7 C1036.1,307.8 1035.7,304.5 1036.2,298.6 C1036.8,292.8 1036.7,292.0 1037.2,288.6 C1037.8,285.3 1037.7,285.1 1038.2,286.1 C1038.8,287.1 1038.6,287.4 1039.2,292.4 C1039.9,297.4 1040.0,300.9 1040.8,304.9 C1041.6,308.9 1041.5,305.4 1042.3,307.4 C1043.1,309.4 1042.8,310.7 1043.8,312.4 C1044.7,314.1 1044.6,313.0 1045.8,313.7 C1047.0,314.3 1047.1,313.2 1048.3,314.9 C1049.4,316.6 1049.2,317.9 1050.1,319.9 C1051.0,321.9 1050.8,320.8 1051.6,322.4 C1052.4,324.1 1052.4,324.7 1053.1,326.2 C1053.9,327.6 1053.6,328.3 1054.4,327.9 C1055.2,327.6 1055.1,326.4 1056.1,324.9 C1057.1,323.5 1057.3,326.1 1058.2,322.4 C1059.0,318.7 1058.6,316.5 1059.2,311.2 C1059.7,305.8 1059.8,305.2 1060.2,302.4 C1060.6,299.6 1060.5,301.1 1060.7,300.6 L1061,421.5 L25,421.5 Z" fill="#3ec1f3" fill-opacity="0.09" stroke="none"/>
<text x="29.3" y="390.0" class="yl" textLength="24.8" lengthAdjust="spacingAndGlyphs">1,000</text><text x="29.3" y="359.2" class="yl" textLength="24.8" lengthAdjust="spacingAndGlyphs">2,000</text><text x="29.3" y="328.5" class="yl" textLength="24.8" lengthAdjust="spacingAndGlyphs">3,000</text><text x="29.3" y="297.8" class="yl" textLength="24.8" lengthAdjust="spacingAndGlyphs">4,000</text><text x="29.3" y="267.1" class="yl" textLength="24.8" lengthAdjust="spacingAndGlyphs">5,000</text><text x="29.3" y="236.3" class="yl" textLength="24.8" lengthAdjust="spacingAndGlyphs">6,000</text><text x="29.3" y="205.6" class="yl" textLength="24.8" lengthAdjust="spacingAndGlyphs">7,000</text>
<path d="M25.0,279.9 C25.7,282.7 25.8,286.6 27.5,290.6 C29.2,294.6 29.3,293.1 31.3,294.9 C33.3,296.7 33.2,295.9 35.0,297.4 C36.8,298.9 36.6,298.6 38.0,300.6 C39.5,302.7 38.9,304.2 40.5,305.1 C42.2,306.1 43.0,305.9 44.3,304.1 C45.6,302.4 44.9,305.5 45.5,298.6 C46.1,291.8 46.0,287.4 46.5,278.6 C47.1,269.8 47.0,267.6 47.5,265.6 C48.1,263.6 47.9,265.1 48.5,271.1 C49.2,277.1 49.4,283.4 50.0,288.1 C50.7,292.8 50.4,290.5 51.0,288.6 C51.7,286.8 51.7,284.6 52.5,281.1 C53.4,277.6 53.3,276.4 54.3,275.4 C55.3,274.4 55.1,276.6 56.3,277.4 C57.5,278.1 57.5,277.8 58.8,278.1 C60.1,278.4 60.2,277.1 61.3,278.6 C62.4,280.1 62.2,281.4 63.1,283.6 C63.9,285.9 63.7,287.8 64.6,287.1 C65.4,286.5 65.4,283.7 66.3,281.1 C67.3,278.5 67.3,281.4 68.1,277.4 C68.9,273.4 68.6,272.1 69.3,266.1 C70.1,260.1 70.2,256.5 70.8,254.8 C71.5,253.2 71.1,255.5 71.8,259.8 C72.6,264.2 72.6,268.8 73.6,271.1 C74.6,273.4 74.5,269.5 75.6,268.6 C76.6,267.7 76.5,266.8 77.6,267.8 C78.7,268.8 78.7,270.1 79.6,272.4 C80.5,274.6 80.3,273.1 81.1,276.1 C81.9,279.1 81.7,279.6 82.6,283.6 C83.5,287.6 83.6,286.1 84.6,291.1 C85.6,296.1 85.5,297.7 86.3,302.4 C87.1,307.1 86.7,305.0 87.6,308.6 C88.5,312.3 88.6,312.8 89.6,316.2 C90.6,319.5 90.4,317.8 91.4,321.2 C92.3,324.5 92.1,326.1 93.1,328.7 C94.1,331.2 94.0,329.9 95.1,330.7 C96.2,331.5 96.3,332.9 97.1,331.7 C97.9,330.5 97.7,334.3 98.1,326.2 C98.6,318.0 98.5,311.8 98.9,301.1 C99.3,290.5 99.0,291.8 99.6,286.1 C100.3,280.4 100.4,282.9 101.4,279.9 C102.3,276.9 102.3,276.9 103.1,274.9 C104.0,272.8 103.7,274.4 104.6,272.4 C105.6,270.3 105.7,267.3 106.6,267.3 C107.6,267.3 107.3,269.2 108.1,272.4 C108.9,275.5 108.9,276.9 109.6,279.1 C110.4,281.3 110.2,282.4 110.9,280.6 C111.6,278.8 111.4,276.2 112.1,272.4 C112.9,268.5 113.0,273.8 113.6,266.1 C114.3,258.4 114.1,255.6 114.6,243.6 C115.2,231.5 115.1,228.0 115.6,221.0 C116.2,214.0 116.0,217.9 116.6,217.3 C117.3,216.6 117.2,217.4 118.2,218.5 C119.1,219.7 119.2,218.5 120.2,221.5 C121.1,224.5 120.9,226.3 121.7,229.8 C122.5,233.3 122.3,232.8 123.2,234.8 C124.0,236.8 123.8,235.0 124.7,237.3 C125.5,239.6 125.5,240.9 126.4,243.6 C127.3,246.2 127.2,245.0 128.2,247.3 C129.2,249.6 129.2,248.3 130.2,252.3 C131.1,256.3 130.9,257.8 131.7,262.3 C132.5,266.9 132.2,267.3 133.2,269.4 C134.1,271.4 134.1,270.1 135.2,269.9 C136.2,269.6 136.4,272.3 137.2,268.6 C138.0,264.9 137.6,265.4 138.2,256.1 C138.7,246.7 138.6,240.8 139.2,233.5 C139.7,226.3 139.6,228.4 140.2,229.0 C140.7,229.7 140.6,231.2 141.2,236.1 C141.7,240.9 141.5,243.3 142.2,247.3 C142.8,251.3 142.9,248.7 143.7,251.1 C144.5,253.4 144.4,253.7 145.2,256.1 C146.0,258.4 145.9,256.5 146.7,259.8 C147.5,263.2 147.4,264.9 148.2,268.6 C149.0,272.3 148.8,271.6 149.7,273.6 C150.6,275.6 150.6,274.4 151.7,276.1 C152.8,277.8 152.8,277.3 153.7,279.9 C154.6,282.4 154.4,283.8 155.2,285.6 C156.0,287.5 155.9,286.9 156.7,286.9 C157.5,286.9 157.3,286.5 158.2,285.6 C159.1,284.8 159.3,287.5 160.2,283.6 C161.1,279.7 160.8,275.9 161.5,271.1 C162.1,266.3 162.0,265.9 162.7,265.6 C163.4,265.3 163.2,266.4 164.0,269.9 C164.8,273.3 165.0,276.3 165.7,278.6 C166.5,280.9 166.1,280.1 166.7,278.6 C167.4,277.1 167.3,275.2 168.2,273.1 C169.2,271.0 169.0,271.8 170.2,270.6 C171.4,269.4 171.7,268.3 172.7,268.6 C173.8,268.9 173.4,269.9 174.2,271.6 C175.0,273.3 174.8,272.6 175.7,274.9 C176.7,277.1 176.5,277.7 177.7,279.9 C178.9,282.1 178.9,281.8 180.2,283.1 C181.6,284.5 181.5,285.7 182.7,284.9 C183.9,284.0 183.8,282.1 184.8,279.9 C185.7,277.7 185.3,278.6 186.2,276.6 C187.2,274.6 187.2,274.5 188.2,272.4 C189.3,270.2 189.3,271.6 190.3,268.6 C191.2,265.6 191.1,263.4 191.8,261.1 C192.4,258.7 192.1,257.8 192.8,259.8 C193.4,261.8 193.7,263.9 194.3,268.6 C194.9,273.3 194.3,273.7 195.0,277.4 C195.7,281.0 195.9,279.9 197.0,282.4 C198.1,284.8 197.8,285.0 199.0,286.6 C200.2,288.3 200.1,287.8 201.5,288.6 C203.0,289.5 203.3,289.2 204.5,289.9 C205.7,290.5 205.4,286.8 206.0,291.1 C206.7,295.5 206.5,298.1 207.0,306.1 C207.6,314.2 207.4,315.2 208.0,321.2 C208.7,327.2 208.7,322.0 209.5,328.7 C210.3,335.4 210.2,340.0 211.0,346.2 C211.8,352.4 211.9,353.3 212.5,352.0 C213.2,350.6 213.0,348.1 213.5,341.2 C214.1,334.3 213.7,332.2 214.5,326.2 C215.3,320.2 215.5,322.3 216.5,318.7 C217.6,315.0 217.3,315.1 218.5,312.4 C219.7,309.7 219.7,310.0 221.1,308.6 C222.4,307.3 222.1,308.2 223.6,307.4 C225.0,306.6 225.2,307.0 226.6,305.6 C227.9,304.3 227.6,306.3 228.6,302.4 C229.5,298.5 229.3,296.5 230.1,291.1 C230.9,285.8 230.8,286.7 231.6,282.4 C232.4,278.0 232.3,278.5 233.1,274.9 C233.9,271.2 233.5,270.9 234.6,268.6 C235.6,266.3 235.7,266.9 237.1,266.1 C238.4,265.3 238.2,265.3 239.6,265.6 C240.9,265.9 241.0,267.9 242.1,267.3 C243.1,266.8 242.8,265.4 243.6,263.6 C244.4,261.8 244.1,261.0 245.1,260.6 C246.0,260.2 245.9,261.4 247.1,262.1 C248.3,262.7 248.4,262.8 249.6,263.1 C250.8,263.4 250.8,266.3 251.6,263.1 C252.4,259.9 251.9,258.3 252.6,251.1 C253.3,243.9 253.4,241.2 254.1,236.1 C254.8,230.9 254.8,231.5 255.3,231.8 C255.9,232.1 255.8,233.2 256.4,237.3 C257.0,241.4 256.7,243.3 257.6,247.3 C258.5,251.3 258.7,250.0 259.6,252.3 C260.5,254.7 260.3,254.4 261.1,256.1 C261.9,257.7 261.8,255.2 262.6,258.6 C263.4,261.9 263.3,264.3 264.1,268.6 C264.9,272.9 264.8,270.8 265.6,274.9 C266.4,278.9 266.3,279.9 267.1,283.6 C267.9,287.3 267.7,285.6 268.6,288.6 C269.6,291.6 269.6,293.0 270.6,294.9 C271.7,296.7 271.6,295.6 272.6,295.6 C273.7,295.6 273.8,298.8 274.6,294.9 C275.4,291.0 275.0,288.8 275.6,281.1 C276.3,273.4 276.5,271.1 277.1,266.1 C277.8,261.1 277.6,262.3 278.1,262.3 C278.7,262.3 278.5,263.2 279.1,266.1 C279.8,269.0 279.8,270.8 280.6,273.1 C281.4,275.4 281.3,273.4 282.1,274.9 C282.9,276.3 282.6,277.6 283.6,278.6 C284.7,279.6 285.1,278.4 286.1,278.6 C287.2,278.8 287.0,276.7 287.6,279.4 C288.3,282.0 288.0,284.1 288.6,288.6 C289.3,293.1 289.2,293.5 290.1,296.1 C291.1,298.8 291.1,297.4 292.1,298.6 C293.2,299.8 293.1,300.0 294.2,300.6 C295.2,301.3 295.1,301.1 296.2,301.1 C297.2,301.1 297.4,306.0 298.2,300.6 C299.0,295.3 298.6,290.7 299.2,281.1 C299.7,271.6 299.6,270.5 300.2,264.8 C300.8,259.2 300.8,259.5 301.4,259.8 C302.1,260.2 301.9,262.6 302.7,266.1 C303.4,269.6 303.4,271.2 304.2,273.1 C305.0,275.0 304.7,273.3 305.7,273.1 C306.6,272.9 306.7,270.9 307.7,272.4 C308.6,273.8 308.4,274.9 309.2,278.6 C310.0,282.3 309.9,282.4 310.7,286.1 C311.5,289.8 311.4,287.7 312.2,292.4 C313.0,297.1 312.9,299.4 313.7,303.6 C314.5,307.9 314.3,305.8 315.2,308.1 C316.1,310.5 316.3,311.3 317.2,312.4 C318.1,313.5 317.8,313.1 318.7,312.4 C319.6,311.7 319.9,312.9 320.7,309.9 C321.5,306.9 321.0,307.5 321.7,301.1 C322.4,294.8 322.5,291.1 323.2,286.1 C323.9,281.1 323.8,282.4 324.4,282.4 C325.1,282.4 325.0,283.4 325.7,286.1 C326.4,288.8 326.3,289.8 327.2,292.4 C328.1,294.9 328.3,294.0 329.2,295.6 C330.1,297.3 329.8,297.2 330.7,298.6 C331.6,300.1 331.8,299.8 332.7,301.1 C333.6,302.5 333.4,301.6 334.2,303.6 C335.0,305.7 334.9,306.3 335.7,308.6 C336.5,311.0 336.4,310.1 337.2,312.4 C338.0,314.7 337.9,315.1 338.7,317.4 C339.5,319.8 339.3,320.8 340.2,321.2 C341.2,321.5 341.3,320.7 342.2,318.7 C343.2,316.7 342.9,319.7 343.7,313.7 C344.5,307.7 344.4,303.2 345.2,296.1 C346.0,289.1 346.1,289.9 346.7,287.4 C347.4,284.8 347.1,286.3 347.7,286.6 C348.4,287.0 348.3,287.4 349.2,288.6 C350.2,289.8 350.2,291.1 351.2,291.1 C352.3,291.1 352.2,290.1 353.2,288.6 C354.3,287.2 354.2,286.8 355.2,285.6 C356.3,284.4 356.4,283.3 357.2,284.1 C358.1,284.9 357.6,284.7 358.2,288.6 C358.9,292.5 358.9,294.3 359.8,298.6 C360.6,303.0 360.5,300.6 361.3,304.9 C362.1,309.2 362.0,310.6 362.8,314.9 C363.6,319.2 363.5,318.5 364.3,321.2 C365.0,323.8 364.8,323.5 365.5,324.9 C366.2,326.4 366.2,328.3 366.8,326.7 C367.3,325.0 367.0,324.1 367.5,318.7 C368.0,313.2 368.0,311.0 368.5,306.1 C369.0,301.3 368.8,302.0 369.5,300.6 C370.2,299.3 370.1,300.3 371.0,301.1 C372.0,301.9 372.0,302.8 373.0,303.6 C374.1,304.5 374.0,304.1 375.0,304.1 C376.1,304.1 375.8,304.3 377.0,303.6 C378.2,303.0 378.3,303.0 379.5,301.6 C380.7,300.3 380.6,300.3 381.5,298.6 C382.5,297.0 382.4,296.0 383.0,295.4 C383.7,294.7 383.5,294.3 384.0,296.1 C384.6,298.0 384.4,299.1 385.0,302.4 C385.7,305.7 385.7,306.8 386.5,308.6 C387.3,310.5 387.1,309.2 388.0,309.4 C389.0,309.6 389.2,311.3 390.1,309.4 C390.9,307.5 390.5,306.6 391.1,302.4 C391.6,298.2 391.5,296.6 392.1,293.6 C392.6,290.6 392.5,291.1 393.1,291.1 C393.6,291.1 393.4,291.6 394.1,293.6 C394.7,295.6 394.6,297.0 395.6,298.6 C396.5,300.3 396.5,299.4 397.6,299.9 C398.6,300.4 398.8,299.0 399.6,300.6 C400.4,302.3 399.9,302.7 400.6,306.1 C401.2,309.6 401.3,311.0 402.1,313.7 C402.9,316.3 402.8,313.5 403.6,316.2 C404.4,318.8 404.3,320.7 405.1,323.7 C405.8,326.7 405.7,327.4 406.3,327.4 C407.0,327.4 406.8,325.7 407.6,323.7 C408.3,321.7 408.3,321.9 409.1,319.9 C409.9,317.9 409.8,318.8 410.6,316.2 C411.4,313.5 411.4,313.2 412.1,309.9 C412.7,306.6 412.5,310.0 413.1,303.6 C413.6,297.3 413.5,293.5 414.1,286.1 C414.6,278.8 414.5,279.1 415.1,276.1 C415.7,273.1 415.5,274.5 416.3,274.9 C417.1,275.2 417.1,276.4 418.1,277.4 C419.1,278.4 419.2,276.9 420.1,278.6 C421.0,280.3 420.7,281.3 421.6,283.6 C422.5,286.0 422.7,284.7 423.6,287.4 C424.5,290.0 424.3,290.6 425.1,293.6 C425.9,296.6 425.8,295.3 426.6,298.6 C427.4,302.0 427.3,302.8 428.1,306.1 C428.9,309.5 428.8,308.5 429.6,311.2 C430.4,313.8 430.3,314.2 431.1,316.2 C431.9,318.2 431.8,319.0 432.6,318.7 C433.4,318.3 433.3,317.2 434.1,314.9 C434.9,312.6 434.9,313.6 435.6,309.9 C436.3,306.2 436.1,306.8 436.6,301.1 C437.1,295.5 437.0,294.2 437.6,288.6 C438.3,283.0 438.5,281.4 439.1,280.1 C439.8,278.8 439.6,280.0 440.1,283.6 C440.7,287.2 440.5,289.3 441.1,293.6 C441.7,298.0 441.8,300.6 442.4,299.9 C443.0,299.2 442.8,298.1 443.4,291.1 C443.9,284.1 443.8,280.9 444.4,273.6 C444.9,266.3 444.8,266.8 445.4,263.6 C445.9,260.4 445.8,260.2 446.4,261.6 C446.9,262.9 446.8,264.4 447.4,268.6 C448.0,272.8 447.9,274.4 448.6,277.4 C449.4,280.4 449.3,277.2 450.1,279.9 C450.9,282.5 450.8,284.4 451.6,287.4 C452.4,290.4 452.3,288.8 453.1,291.1 C453.9,293.5 454.0,294.3 454.6,296.1 C455.3,298.0 455.1,298.8 455.6,298.1 C456.2,297.5 456.1,297.5 456.6,293.6 C457.2,289.8 457.0,287.6 457.6,283.6 C458.3,279.6 458.3,281.9 459.1,278.6 C459.9,275.3 459.8,274.6 460.6,271.1 C461.4,267.6 461.5,265.9 462.1,265.6 C462.8,265.3 462.5,266.7 463.1,269.9 C463.8,273.0 463.9,273.7 464.7,277.4 C465.5,281.0 465.4,280.3 466.2,283.6 C467.0,287.0 466.9,287.5 467.7,289.9 C468.5,292.2 468.1,291.5 469.2,292.4 C470.2,293.2 470.3,293.1 471.7,293.1 C473.0,293.1 473.1,292.7 474.2,292.4 C475.2,292.0 475.0,290.9 475.7,291.9 C476.3,292.9 476.0,293.3 476.7,296.1 C477.3,298.9 477.5,300.5 478.2,302.4 C478.8,304.3 478.6,304.8 479.2,303.1 C479.7,301.5 479.5,299.0 480.2,296.1 C480.8,293.3 480.7,293.7 481.7,292.4 C482.6,291.0 482.8,291.6 483.7,291.1 C484.6,290.7 484.5,289.6 485.2,290.6 C485.9,291.6 485.5,291.1 486.2,294.9 C486.9,298.7 486.9,301.2 487.7,304.9 C488.5,308.6 488.4,305.6 489.2,308.6 C490.0,311.7 489.9,313.4 490.7,316.2 C491.5,319.0 491.5,319.2 492.2,319.2 C492.9,319.2 492.7,318.3 493.2,316.2 C493.7,314.0 493.7,312.8 494.2,311.2 C494.7,309.5 494.5,309.6 495.2,309.9 C495.9,310.2 495.9,311.4 496.7,312.4 C497.5,313.4 497.4,314.3 498.2,313.7 C499.0,313.0 498.8,311.9 499.7,309.9 C500.6,307.9 500.9,310.5 501.7,306.1 C502.5,301.8 502.2,301.0 502.7,293.6 C503.2,286.3 503.2,284.3 503.7,278.6 C504.3,272.9 504.1,273.7 504.7,272.4 C505.4,271.0 505.4,272.7 506.2,273.6 C507.0,274.5 506.9,274.7 507.7,275.6 C508.5,276.5 508.6,275.4 509.2,276.9 C509.9,278.3 509.7,279.2 510.2,281.1 C510.8,283.0 510.6,283.8 511.2,284.1 C511.9,284.5 511.9,283.8 512.7,282.4 C513.5,280.9 513.4,279.5 514.2,278.6 C515.0,277.7 514.9,278.4 515.7,279.1 C516.5,279.8 516.3,280.4 517.2,281.1 C518.2,281.8 518.0,281.7 519.2,281.9 C520.4,282.1 520.8,280.7 521.7,281.9 C522.7,283.0 522.1,283.0 522.7,286.1 C523.4,289.3 523.4,291.8 524.2,293.6 C525.1,295.5 525.0,293.9 525.8,293.1 C526.5,292.3 526.5,291.8 527.2,290.6 C528.0,289.4 528.1,291.8 528.8,288.6 C529.4,285.4 529.2,284.3 529.8,278.6 C530.3,272.9 530.2,271.1 530.8,267.3 C531.3,263.5 531.2,264.3 531.8,264.3 C532.3,264.3 532.2,265.2 532.8,267.3 C533.3,269.5 532.9,270.3 533.8,272.4 C534.6,274.4 534.9,274.2 536.0,274.9 C537.1,275.5 536.9,275.7 538.0,274.9 C539.1,274.0 538.8,272.7 540.0,271.6 C541.2,270.5 541.3,270.7 542.5,270.6 C543.7,270.5 543.7,269.0 544.5,271.1 C545.3,273.2 544.9,273.9 545.5,278.6 C546.2,283.3 546.4,285.4 547.0,288.6 C547.7,291.8 547.4,290.6 548.0,290.6 C548.7,290.6 548.6,289.5 549.5,288.6 C550.5,287.8 550.7,290.7 551.5,287.4 C552.3,284.0 552.0,281.8 552.5,276.1 C553.1,270.4 553.0,269.6 553.5,266.1 C554.1,262.6 554.0,262.8 554.5,263.1 C555.1,263.4 554.9,264.5 555.5,267.3 C556.2,270.1 556.2,271.6 557.0,273.6 C557.8,275.6 557.7,273.8 558.5,274.9 C559.3,275.9 559.2,276.7 560.0,277.4 C560.9,278.0 560.8,278.2 561.5,277.4 C562.3,276.5 562.2,275.4 563.0,274.1 C563.8,272.8 563.6,272.6 564.5,272.4 C565.5,272.1 565.6,272.4 566.5,273.1 C567.5,273.8 567.3,272.4 568.1,274.9 C568.9,277.3 568.8,279.5 569.6,282.4 C570.4,285.2 570.3,284.1 571.1,285.6 C571.9,287.2 571.8,287.0 572.6,288.1 C573.4,289.3 573.4,291.1 574.1,289.9 C574.7,288.7 574.5,290.6 575.1,283.6 C575.6,276.6 575.5,272.3 576.1,263.6 C576.6,254.9 576.6,254.9 577.1,251.1 C577.5,247.3 577.4,248.0 577.8,249.3 C578.2,250.6 578.1,250.9 578.6,256.1 C579.0,261.2 578.9,264.3 579.6,268.6 C580.2,272.9 580.3,270.9 581.1,272.4 C581.9,273.8 581.8,273.0 582.6,274.1 C583.4,275.2 583.3,275.4 584.1,276.6 C584.9,277.8 584.8,277.4 585.6,278.6 C586.4,279.8 586.3,279.6 587.1,281.1 C587.9,282.6 587.7,282.7 588.6,284.1 C589.5,285.6 589.8,284.1 590.6,286.6 C591.4,289.2 591.1,289.4 591.6,293.6 C592.1,297.8 592.1,299.1 592.6,302.4 C593.1,305.7 593.1,305.8 593.6,306.1 C594.1,306.5 594.1,306.3 594.6,303.6 C595.1,301.0 595.1,300.8 595.6,296.1 C596.1,291.5 596.1,290.8 596.6,286.1 C597.1,281.4 597.1,285.3 597.6,278.6 C598.1,271.9 598.1,268.8 598.6,261.1 C599.1,253.4 599.1,253.5 599.6,249.8 C600.1,246.1 600.1,246.6 600.6,247.3 C601.1,248.0 601.1,249.0 601.6,252.3 C602.1,255.7 602.1,257.2 602.6,259.8 C603.1,262.5 602.9,262.3 603.6,262.3 C604.3,262.3 604.3,261.0 605.1,259.8 C605.9,258.6 605.9,257.5 606.6,257.8 C607.3,258.2 607.0,258.5 607.6,261.1 C608.3,263.6 608.3,264.3 609.1,267.3 C609.9,270.3 609.8,268.7 610.6,272.4 C611.4,276.0 611.3,277.4 612.1,281.1 C612.9,284.8 613.0,283.1 613.6,286.1 C614.3,289.1 614.1,287.4 614.6,292.4 C615.2,297.4 615.0,299.9 615.6,304.9 C616.2,309.9 616.3,311.2 616.9,311.2 C617.5,311.2 617.3,310.2 617.9,304.9 C618.4,299.6 618.3,297.5 618.9,291.1 C619.4,284.8 619.3,285.8 619.9,281.1 C620.4,276.4 620.4,281.6 620.9,273.6 C621.4,265.6 621.4,260.4 621.9,251.1 C622.4,241.7 622.4,242.6 622.9,238.6 C623.4,234.5 623.4,235.1 623.9,236.1 C624.4,237.1 624.4,238.0 624.9,242.3 C625.4,246.6 625.2,249.0 625.9,252.3 C626.6,255.7 626.6,253.8 627.6,254.8 C628.7,255.8 628.6,255.1 629.6,256.1 C630.7,257.1 630.7,256.6 631.6,258.6 C632.6,260.6 632.2,261.3 633.1,263.6 C634.1,265.9 634.2,265.3 635.2,267.3 C636.1,269.3 636.0,268.4 636.7,271.1 C637.3,273.8 637.0,274.4 637.7,277.4 C638.3,280.4 638.4,281.0 639.2,282.4 C640.0,283.7 639.7,282.8 640.7,282.4 C641.6,281.9 641.9,282.9 642.7,280.6 C643.5,278.3 643.1,278.8 643.7,273.6 C644.2,268.4 644.1,267.1 644.7,261.1 C645.2,255.1 645.1,254.3 645.7,251.1 C646.2,247.9 646.1,248.1 646.7,249.1 C647.2,250.1 647.1,251.3 647.7,254.8 C648.2,258.4 648.0,259.5 648.7,262.3 C649.3,265.2 649.1,264.7 650.2,265.6 C651.2,266.5 651.3,265.9 652.7,265.6 C654.0,265.3 653.9,264.7 655.2,264.3 C656.5,263.9 656.5,263.8 657.7,264.1 C658.9,264.4 658.9,263.7 659.7,265.6 C660.5,267.5 660.0,268.2 660.7,271.1 C661.4,274.0 661.4,274.9 662.2,276.6 C663.0,278.3 662.9,277.8 663.7,277.4 C664.5,276.9 664.4,276.0 665.2,274.9 C666.0,273.7 666.0,278.1 666.7,273.1 C667.4,268.1 667.2,264.3 667.7,256.1 C668.2,247.9 668.2,246.5 668.7,242.3 C669.2,238.1 669.2,239.6 669.7,240.3 C670.2,241.0 670.2,241.6 670.7,244.8 C671.2,248.0 671.0,249.3 671.7,252.3 C672.4,255.3 672.4,254.4 673.2,256.1 C674.0,257.7 673.9,257.1 674.7,258.6 C675.5,260.0 675.3,260.6 676.2,261.6 C677.2,262.6 677.3,262.3 678.2,262.3 C679.2,262.3 679.1,260.6 679.7,261.6 C680.4,262.6 680.2,263.2 680.7,266.1 C681.3,269.0 681.1,269.0 681.7,272.4 C682.4,275.7 682.6,272.9 683.2,278.6 C683.9,284.3 683.7,286.3 684.2,293.6 C684.8,301.0 684.7,302.1 685.2,306.1 C685.8,310.2 685.6,308.3 686.2,308.6 C686.9,309.0 686.8,308.4 687.7,307.4 C688.7,306.4 688.9,309.9 689.7,304.9 C690.5,299.9 690.2,297.0 690.7,288.6 C691.3,280.3 691.2,278.4 691.7,273.6 C692.3,268.8 692.2,270.3 692.7,270.6 C693.3,270.9 693.1,271.5 693.8,274.9 C694.4,278.2 694.3,280.6 695.2,283.1 C696.2,285.6 696.2,283.5 697.2,284.1 C698.3,284.8 698.3,284.6 699.2,285.6 C700.2,286.7 699.8,287.0 700.8,288.1 C701.7,289.3 701.8,288.7 702.8,289.9 C703.7,291.0 703.5,291.7 704.3,292.4 C705.0,293.0 704.8,291.7 705.5,292.4 C706.2,293.0 706.2,292.5 707.0,294.9 C707.8,297.2 707.7,298.7 708.5,301.1 C709.3,303.6 709.2,302.3 710.0,304.1 C710.8,306.0 710.9,306.7 711.5,308.1 C712.2,309.6 712.0,311.3 712.5,309.4 C713.1,307.5 713.0,308.7 713.5,301.1 C714.1,293.6 714.0,288.5 714.5,281.1 C715.1,273.8 715.0,275.5 715.5,273.6 C716.1,271.7 716.0,272.1 716.5,274.1 C717.1,276.1 716.9,277.6 717.5,281.1 C718.2,284.6 718.2,284.4 719.0,287.4 C719.8,290.4 719.7,290.4 720.5,292.4 C721.3,294.4 721.2,295.2 722.0,294.9 C722.8,294.5 722.7,292.9 723.5,291.1 C724.3,289.3 724.2,288.1 725.0,288.1 C725.8,288.1 725.7,289.7 726.5,291.1 C727.3,292.6 727.2,292.3 728.0,293.6 C728.8,295.0 728.9,293.8 729.5,296.1 C730.2,298.5 729.9,299.6 730.5,302.4 C731.2,305.2 731.1,306.0 731.8,306.6 C732.5,307.3 732.3,306.2 733.0,304.9 C733.8,303.6 733.8,302.8 734.5,301.6 C735.3,300.5 735.2,306.1 735.8,300.6 C736.4,295.2 736.3,289.7 736.8,281.1 C737.3,272.6 737.3,272.6 737.8,268.6 C738.3,264.6 738.2,266.2 738.8,266.1 C739.4,266.0 739.3,266.9 740.1,268.1 C740.8,269.3 740.8,269.7 741.6,270.6 C742.4,271.5 742.3,270.1 743.1,271.6 C743.9,273.1 743.8,274.8 744.6,276.1 C745.4,277.4 745.3,277.6 746.1,276.6 C746.9,275.6 746.8,274.0 747.6,272.4 C748.4,270.7 748.3,270.3 749.1,270.6 C749.9,270.9 749.8,271.8 750.6,273.6 C751.4,275.4 751.4,273.4 752.1,277.4 C752.7,281.4 752.4,283.5 753.1,288.6 C753.7,293.8 753.8,294.0 754.6,296.6 C755.4,299.3 755.1,297.6 756.1,298.6 C757.0,299.6 757.3,302.4 758.1,300.4 C758.9,298.4 758.6,296.9 759.1,291.1 C759.6,285.3 759.6,283.6 760.1,278.6 C760.6,273.6 760.6,274.2 761.1,272.4 C761.6,270.5 761.6,270.9 762.1,271.6 C762.6,272.3 762.4,272.8 763.1,274.9 C763.8,276.9 763.8,278.4 764.6,279.4 C765.4,280.4 765.3,279.3 766.1,278.6 C766.9,277.9 766.8,276.6 767.6,276.6 C768.4,276.6 768.3,276.4 769.1,278.6 C769.9,280.8 769.7,282.3 770.6,284.9 C771.5,287.4 771.7,286.5 772.6,288.1 C773.5,289.8 773.3,289.8 774.1,291.1 C774.9,292.5 774.8,291.7 775.6,293.1 C776.4,294.6 776.3,295.2 777.1,296.6 C777.9,298.1 777.6,297.9 778.6,298.6 C779.7,299.4 780.2,301.4 781.1,299.4 C782.1,297.4 781.6,296.0 782.1,291.1 C782.7,286.3 782.6,285.1 783.1,281.1 C783.7,277.1 783.6,277.6 784.1,276.1 C784.7,274.6 784.5,274.8 785.1,275.6 C785.8,276.4 785.7,277.8 786.6,279.1 C787.6,280.4 787.6,279.9 788.6,280.6 C789.7,281.3 789.6,281.4 790.6,281.9 C791.7,282.3 791.6,282.4 792.6,282.4 C793.7,282.4 793.7,280.9 794.6,281.9 C795.6,282.9 795.3,284.0 796.1,286.1 C796.9,288.3 796.8,287.7 797.6,289.9 C798.5,292.0 798.4,291.9 799.1,294.1 C799.9,296.3 799.7,297.1 800.6,298.1 C801.6,299.2 801.6,298.7 802.6,298.1 C803.7,297.6 803.9,299.3 804.7,296.1 C805.5,292.9 805.1,291.1 805.7,286.1 C806.2,281.1 806.1,280.5 806.7,277.4 C807.2,274.2 807.1,274.4 807.7,274.4 C808.2,274.4 808.1,275.2 808.7,277.4 C809.2,279.5 809.1,280.0 809.7,282.4 C810.2,284.7 810.0,283.8 810.7,286.1 C811.3,288.5 811.5,288.1 812.2,291.1 C812.8,294.1 812.5,295.1 813.2,297.4 C813.8,299.7 813.9,300.6 814.7,299.9 C815.5,299.2 815.4,296.9 816.2,294.9 C817.0,292.9 816.7,293.0 817.7,292.4 C818.6,291.7 818.7,292.0 819.7,292.4 C820.6,292.7 820.5,291.6 821.2,293.6 C821.8,295.6 821.5,297.1 822.2,299.9 C822.8,302.7 822.8,302.6 823.7,304.1 C824.6,305.7 824.8,304.9 825.7,305.6 C826.6,306.4 826.5,307.8 827.2,306.9 C827.9,306.0 827.7,308.6 828.2,302.4 C828.7,296.2 828.7,290.6 829.2,283.6 C829.7,276.6 829.7,278.2 830.2,276.1 C830.7,274.0 830.7,274.6 831.2,275.6 C831.7,276.6 831.5,277.4 832.2,279.9 C832.9,282.3 832.9,283.5 833.7,284.9 C834.5,286.2 834.3,285.1 835.2,284.9 C836.1,284.7 836.1,283.9 837.2,284.1 C838.3,284.3 838.1,285.0 839.2,285.6 C840.3,286.3 840.1,285.5 841.2,286.6 C842.3,287.8 842.3,287.3 843.2,289.9 C844.1,292.4 843.9,293.3 844.7,296.1 C845.5,299.0 845.3,299.0 846.2,300.6 C847.2,302.3 847.2,301.6 848.2,302.4 C849.3,303.2 849.4,305.3 850.2,303.6 C851.0,302.0 850.7,302.8 851.2,296.1 C851.8,289.5 851.7,285.3 852.2,278.6 C852.8,271.9 852.6,273.2 853.2,271.1 C853.9,269.0 853.7,270.9 854.7,270.6 C855.8,270.3 856.3,272.4 857.2,269.9 C858.2,267.3 857.7,266.1 858.2,261.1 C858.8,256.1 858.7,254.5 859.2,251.1 C859.8,247.6 859.4,248.7 860.2,248.1 C861.0,247.4 861.2,248.3 862.2,248.6 C863.3,248.8 863.4,247.1 864.2,249.1 C865.1,251.1 864.7,252.1 865.2,256.1 C865.8,260.1 865.7,261.4 866.2,264.1 C866.8,266.8 866.7,263.9 867.2,266.1 C867.8,268.3 867.6,269.0 868.2,272.4 C868.9,275.7 868.8,276.8 869.8,278.6 C870.7,280.4 870.7,279.2 871.8,279.1 C872.8,279.0 873.0,280.9 873.8,278.1 C874.6,275.3 874.4,271.8 874.8,268.6 C875.1,265.4 874.7,269.8 875.0,266.1 C875.3,262.4 875.5,258.5 876.0,254.8 C876.5,251.1 876.5,252.0 877.0,252.3 C877.5,252.7 877.5,253.1 878.0,256.1 C878.5,259.1 878.2,261.4 879.0,263.6 C879.8,265.8 879.8,264.2 881.0,264.3 C882.2,264.5 882.5,263.0 883.5,264.1 C884.6,265.2 884.2,266.4 885.0,268.6 C885.8,270.8 885.7,271.0 886.5,272.4 C887.3,273.7 887.2,271.9 888.0,273.6 C888.8,275.3 888.7,276.3 889.5,278.6 C890.3,280.9 890.2,279.4 891.0,282.4 C891.8,285.4 891.7,287.3 892.5,289.9 C893.3,292.4 893.0,291.3 894.0,291.9 C895.1,292.4 895.6,294.1 896.5,291.9 C897.5,289.7 897.0,288.5 897.5,283.6 C898.1,278.7 898.0,277.6 898.5,273.6 C899.1,269.6 899.0,269.6 899.5,268.6 C900.1,267.6 900.0,268.0 900.5,269.9 C901.1,271.7 900.9,272.7 901.5,275.6 C902.2,278.5 902.2,277.8 903.0,280.6 C903.8,283.4 903.8,284.0 904.5,286.1 C905.3,288.3 905.2,287.2 906.0,288.6 C906.9,290.1 906.8,290.3 907.6,291.6 C908.4,293.0 908.3,291.9 909.1,293.6 C909.9,295.4 909.8,296.1 910.6,298.1 C911.4,300.1 911.3,299.8 912.1,301.1 C912.9,302.5 912.8,301.5 913.6,303.1 C914.4,304.8 914.4,305.4 915.1,307.4 C915.7,309.4 915.4,310.2 916.1,310.7 C916.7,311.1 916.6,310.0 917.6,309.1 C918.5,308.3 918.8,309.2 919.6,307.4 C920.4,305.6 920.0,309.4 920.6,302.4 C921.1,295.4 921.0,288.8 921.6,281.1 C922.1,273.4 922.0,274.6 922.6,273.6 C923.1,272.6 923.0,273.0 923.6,277.4 C924.1,281.7 924.0,284.9 924.6,289.9 C925.1,294.9 924.9,293.5 925.6,296.1 C926.2,298.8 926.3,297.4 927.1,299.9 C927.9,302.4 927.8,303.6 928.6,305.6 C929.4,307.7 929.3,305.9 930.1,307.4 C930.9,308.9 930.8,309.2 931.6,311.2 C932.4,313.2 932.4,310.9 933.1,314.9 C933.8,318.9 933.6,320.8 934.1,326.2 C934.6,331.5 934.6,331.6 935.1,334.9 C935.6,338.3 935.4,338.2 936.1,338.7 C936.8,339.2 936.7,338.0 937.6,336.9 C938.5,335.9 938.7,336.8 939.6,334.9 C940.5,333.1 940.3,332.3 941.1,329.9 C941.9,327.6 941.9,329.9 942.6,326.2 C943.3,322.5 943.1,322.8 943.6,316.2 C944.1,309.5 944.1,306.6 944.6,301.1 C945.1,295.7 944.9,297.0 945.6,295.6 C946.3,294.3 946.3,295.5 947.1,296.1 C947.9,296.8 947.8,297.1 948.6,298.1 C949.4,299.1 949.3,298.3 950.1,299.9 C950.9,301.5 950.8,302.6 951.6,304.1 C952.4,305.7 952.3,304.4 953.1,305.6 C953.9,306.8 953.8,307.2 954.6,308.6 C955.4,310.1 955.3,308.8 956.1,311.2 C956.9,313.5 956.8,315.1 957.6,317.4 C958.4,319.8 958.3,318.9 959.1,319.9 C959.9,320.9 959.7,320.2 960.6,321.2 C961.6,322.2 961.7,323.3 962.6,323.7 C963.6,324.0 963.3,323.2 964.1,322.4 C964.9,321.6 965.0,323.0 965.6,320.7 C966.3,318.3 966.1,318.9 966.6,313.7 C967.2,308.5 967.1,305.9 967.6,301.1 C968.2,296.3 968.1,297.0 968.6,295.6 C969.2,294.3 969.1,294.8 969.6,296.1 C970.2,297.5 970.0,299.2 970.6,300.6 C971.3,302.1 971.5,304.8 972.1,301.6 C972.8,298.4 972.6,296.8 973.1,288.6 C973.7,280.5 973.6,277.3 974.2,271.1 C974.7,264.9 974.6,266.5 975.2,265.3 C975.7,264.1 975.6,262.4 976.2,266.6 C976.7,270.8 976.6,271.9 977.2,281.1 C977.7,290.3 977.6,294.5 978.2,301.1 C978.7,307.8 978.5,303.8 979.2,306.1 C979.8,308.5 979.9,307.6 980.7,309.9 C981.5,312.2 981.4,312.9 982.2,314.9 C983.0,316.9 983.0,315.4 983.7,317.4 C984.3,319.4 984.1,320.4 984.7,322.4 C985.2,324.4 985.1,325.3 985.7,324.9 C986.2,324.6 986.1,323.5 986.7,321.2 C987.2,318.8 987.1,318.2 987.7,316.2 C988.2,314.2 988.0,313.7 988.7,313.7 C989.3,313.7 989.2,314.5 990.2,316.2 C991.1,317.8 991.4,316.6 992.2,319.9 C993.0,323.3 992.6,324.0 993.2,328.7 C993.7,333.4 993.7,334.0 994.2,337.4 C994.7,340.9 994.4,340.5 995.2,341.7 C996.0,342.9 996.1,342.1 997.2,341.9 C998.3,341.8 998.4,343.4 999.2,341.2 C1000.0,339.0 999.5,336.7 1000.2,333.7 C1000.9,330.7 1000.8,331.3 1001.7,329.9 C1002.6,328.6 1002.5,329.3 1003.7,328.7 C1004.9,328.0 1004.7,327.9 1006.2,327.4 C1007.7,327.0 1007.7,327.1 1009.2,326.9 C1010.7,326.7 1010.6,328.2 1011.7,326.7 C1012.8,325.1 1012.5,324.0 1013.2,321.2 C1013.9,318.4 1013.6,318.2 1014.2,316.2 C1014.9,314.2 1015.1,319.7 1015.7,313.7 C1016.4,307.6 1016.2,301.9 1016.7,293.6 C1017.3,285.3 1017.3,286.0 1017.7,282.6 C1018.2,279.2 1017.9,280.3 1018.5,280.9 C1019.0,281.5 1019.0,281.9 1019.7,284.9 C1020.5,287.8 1020.4,290.5 1021.2,291.9 C1022.0,293.2 1021.9,290.7 1022.7,289.9 C1023.5,289.0 1023.6,288.3 1024.2,288.6 C1024.9,289.0 1024.6,288.1 1025.2,291.1 C1025.9,294.1 1025.9,296.9 1026.7,299.9 C1027.5,302.9 1027.4,300.7 1028.2,302.4 C1029.0,304.1 1028.9,304.5 1029.7,306.1 C1030.5,307.8 1030.3,307.8 1031.2,308.6 C1032.2,309.5 1032.2,308.9 1033.2,309.4 C1034.3,309.9 1034.4,313.5 1035.2,310.7 C1036.1,307.8 1035.7,304.5 1036.2,298.6 C1036.8,292.8 1036.7,292.0 1037.2,288.6 C1037.8,285.3 1037.7,285.1 1038.2,286.1 C1038.8,287.1 1038.6,287.4 1039.2,292.4 C1039.9,297.4 1040.0,300.9 1040.8,304.9 C1041.6,308.9 1041.5,305.4 1042.3,307.4 C1043.1,309.4 1042.8,310.7 1043.8,312.4 C1044.7,314.1 1044.6,313.0 1045.8,313.7 C1047.0,314.3 1047.1,313.2 1048.3,314.9 C1049.4,316.6 1049.2,317.9 1050.1,319.9 C1051.0,321.9 1050.8,320.8 1051.6,322.4 C1052.4,324.1 1052.4,324.7 1053.1,326.2 C1053.9,327.6 1053.6,328.3 1054.4,327.9 C1055.2,327.6 1055.1,326.4 1056.1,324.9 C1057.1,323.5 1057.3,326.1 1058.2,322.4 C1059.0,318.7 1058.6,316.5 1059.2,311.2 C1059.7,305.8 1059.8,305.2 1060.2,302.4 C1060.6,299.6 1060.5,301.1 1060.7,300.6" fill="none" stroke="#45c4f6" stroke-width="1.75" stroke-linejoin="round" stroke-linecap="round"/>
<text transform="translate(106.6,261.5) scale(0.9,1)" class="mk">A</text><text transform="translate(116.9,212.2) scale(0.9,1)" class="mk">B</text><text transform="translate(238.8,259.7) scale(0.9,1)" class="mk">C</text><text transform="translate(416.3,269.0) scale(0.9,1)" class="mk">D</text><text transform="translate(505,266.8) scale(0.9,1)" class="mk">E</text><text transform="translate(600.6,241.0) scale(0.9,1)" class="mk">F</text><text transform="translate(860.2,241.0) scale(0.9,1)" class="mk">G</text><text transform="translate(945.9,288.8) scale(0.9,1)" class="mk">H</text><text transform="translate(1018.2,273.3) scale(0.62,1)" class="mk" style="font-family:Liberation Mono,monospace">I</text>
<text x="1054.5" y="412.6" class="wm" text-anchor="end">@index.baidu.com</text>
<text x="114.05" y="436.2" class="xl" textLength="45.5" lengthAdjust="spacingAndGlyphs">2019-01-20</text><text x="248.85" y="436.2" class="xl" textLength="45.5" lengthAdjust="spacingAndGlyphs">2019-03-02</text><text x="383.65" y="436.2" class="xl" textLength="45.5" lengthAdjust="spacingAndGlyphs">2019-04-12</text><text x="518.45" y="436.2" class="xl" textLength="45.5" lengthAdjust="spacingAndGlyphs">2019-05-23</text><text x="653.25" y="436.2" class="xl" textLength="45.5" lengthAdjust="spacingAndGlyphs">2019-07-03</text><text x="788.05" y="436.2" class="xl" textLength="45.5" lengthAdjust="spacingAndGlyphs">2019-08-13</text><text x="922.95" y="436.2" class="xl" textLength="45.5" lengthAdjust="spacingAndGlyphs">2019-09-23</text><text x="1015.3" y="436.2" class="xl" textLength="45.5" lengthAdjust="spacingAndGlyphs">2019-10-21</text>
<rect x="27.3" y="448.6" width="1032" height="23.6" fill="#f4f8fe" stroke="#dddfe3" stroke-width="1"/>
<path d="M28,472 L28,468.5 L80,468 L140,467.2 L200,467.4 L260,466.6 L330,467 L400,466.4 L470,466.8 L540,466 L600,466.4 L660,465.8 L720,466 L735,465.3 L760,465.6 L772,464.6 L777,462.5 L782,464.8 L798,465 L802,461 L805.5,454 L809,461 L813,464.5 L830,465.6 L870,465.3 L900,465.8 L955,465.5 L1000,465.8 L1059,465.8 L1059,472 Z" fill="#eef1f6"/>
<line x1="54.1" x2="54.1" y1="469" y2="473.6" stroke="#dde0e5" stroke-width="1"/><line x1="93.2" x2="93.2" y1="469" y2="473.6" stroke="#dde0e5" stroke-width="1"/><line x1="132.4" x2="132.4" y1="469" y2="473.6" stroke="#dde0e5" stroke-width="1"/><line x1="171.6" x2="171.6" y1="469" y2="473.6" stroke="#dde0e5" stroke-width="1"/><line x1="210.8" x2="210.8" y1="469" y2="473.6" stroke="#dde0e5" stroke-width="1"/><line x1="249.9" x2="249.9" y1="469" y2="473.6" stroke="#dde0e5" stroke-width="1"/><line x1="289.1" x2="289.1" y1="469" y2="473.6" stroke="#dde0e5" stroke-width="1"/><line x1="328.3" x2="328.3" y1="469" y2="473.6" stroke="#dde0e5" stroke-width="1"/><line x1="367.4" x2="367.4" y1="469" y2="473.6" stroke="#dde0e5" stroke-width="1"/><line x1="406.6" x2="406.6" y1="469" y2="473.6" stroke="#dde0e5" stroke-width="1"/><line x1="445.8" x2="445.8" y1="469" y2="473.6" stroke="#dde0e5" stroke-width="1"/><line x1="484.9" x2="484.9" y1="469" y2="473.6" stroke="#dde0e5" stroke-width="1"/><line x1="524.1" x2="524.1" y1="469" y2="473.6" stroke="#dde0e5" stroke-width="1"/><line x1="563.3" x2="563.3" y1="469" y2="473.6" stroke="#dde0e5" stroke-width="1"/><line x1="602.5" x2="602.5" y1="469" y2="473.6" stroke="#dde0e5" stroke-width="1"/><line x1="641.6" x2="641.6" y1="469" y2="473.6" stroke="#dde0e5" stroke-width="1"/><line x1="680.8" x2="680.8" y1="469" y2="473.6" stroke="#dde0e5" stroke-width="1"/><line x1="720.0" x2="720.0" y1="469" y2="473.6" stroke="#dde0e5" stroke-width="1"/><line x1="759.1" x2="759.1" y1="469" y2="473.6" stroke="#dde0e5" stroke-width="1"/><line x1="798.3" x2="798.3" y1="469" y2="473.6" stroke="#dde0e5" stroke-width="1"/><line x1="837.5" x2="837.5" y1="469" y2="473.6" stroke="#dde0e5" stroke-width="1"/><line x1="876.6" x2="876.6" y1="469" y2="473.6" stroke="#dde0e5" stroke-width="1"/><line x1="915.8" x2="915.8" y1="469" y2="473.6" stroke="#dde0e5" stroke-width="1"/><line x1="955.0" x2="955.0" y1="469" y2="473.6" stroke="#dde0e5" stroke-width="1"/><line x1="994.1" x2="994.1" y1="469" y2="473.6" stroke="#dde0e5" stroke-width="1"/><line x1="1033.3" x2="1033.3" y1="469" y2="473.6" stroke="#dde0e5" stroke-width="1"/>
<rect x="956" y="448.5" width="101" height="24" fill="#b7d0fa" fill-opacity=".7"/>
<rect x="954.3" y="448" width="4" height="25" rx="1.5" fill="#1b6bf0"/>
<rect x="1055.3" y="448" width="4" height="25" rx="1.5" fill="#1b6bf0"/>
<text x="13.6" y="485.6" class="yr" textLength="22" lengthAdjust="spacingAndGlyphs">2011</text><text x="121.2" y="487.1" class="yr" textLength="22.2" lengthAdjust="spacingAndGlyphs">2012</text><text x="238.7" y="487.1" class="yr" textLength="22.2" lengthAdjust="spacingAndGlyphs">2013</text><text x="356.2" y="487.1" class="yr" textLength="22.2" lengthAdjust="spacingAndGlyphs">2014</text><text x="473.7" y="487.1" class="yr" textLength="22.2" lengthAdjust="spacingAndGlyphs">2015</text><text x="591.2" y="487.1" class="yr" textLength="22.2" lengthAdjust="spacingAndGlyphs">2016</text><text x="708.7" y="487.1" class="yr" textLength="22.2" lengthAdjust="spacingAndGlyphs">2017</text><text x="826.2" y="487.1" class="yr" textLength="22.2" lengthAdjust="spacingAndGlyphs">2018</text><text x="943.7" y="487.1" class="yr" textLength="22.2" lengthAdjust="spacingAndGlyphs">2019</text>
</svg>

<div class="abs h" style="left:25px;top:510.5px">搜索指数概览</div>
<div class="abs help" style="left:97.6px;top:508.6px">?</div>
<div class="abs hl" style="left:25px;top:534.8px;width:1036px"></div>
<div class="abs t" style="left:25px;top:550px">关键词</div>
<div class="abs t" style="right:763.3px;top:550px">整体日均值</div>
<div class="abs t" style="right:647px;top:550px">移动日均值</div>
<div class="abs t" style="right:440px;top:550px">整体同比</div>
<div class="abs t" style="right:322.7px;top:550px">整体环比</div>
<div class="abs t" style="right:167.7px;top:550px">移动同比</div>
<div class="abs t" style="right:50.7px;top:550px">移动环比</div>
<div class="abs hl" style="left:25px;top:571.8px;width:1036px"></div>
<div class="abs" style="left:25px;top:585px;width:9.6px;height:10px;background:#30c4f8"></div>
<div class="abs" style="left:39px;top:585px;font-size:11.5px;color:#444">失眠</div>
<div class="abs v" style="right:763.3px;top:586.5px">4,343</div>
<div class="abs v" style="right:647px;top:586.5px">3,754</div>
<div class="abs v" style="right:451.3px;top:586.9px">-3%</div>
<div class="abs v" style="right:334px;top:586.9px">-2%</div>
<div class="abs v" style="right:179px;top:586.9px">-1%</div>
<div class="abs v" style="right:62px;top:586.9px">-1%</div>
<svg class="abs" style="left:0;top:0" width="1080" height="615" viewBox="0 0 1080 615"><g fill="#22b98a"><path d="M634.95,588.1 h2.2 v3 h2.2 l-3.3,4.6 l-3.3,-4.6 h2.2 z"/><path d="M752.25,588.1 h2.2 v3 h2.2 l-3.3,4.6 l-3.3,-4.6 h2.2 z"/><path d="M906.95,588.1 h2.2 v3 h2.2 l-3.3,4.6 l-3.3,-4.6 h2.2 z"/></g><g fill="#333"><path d="M1023.95,588.1 h2.2 v3 h2.2 l-3.3,4.6 l-3.3,-4.6 h2.2 z"/></g></svg>
<div class="abs" style="left:999px;top:580px;font-size:17px;font-weight:bold;color:#e8202c;letter-spacing:0px">中赚网</div>
<div class="abs" style="left:976.5px;top:597px;font-size:12.3px;font-weight:bold;color:#2323e0">www.you85.com</div>
</body></html>
